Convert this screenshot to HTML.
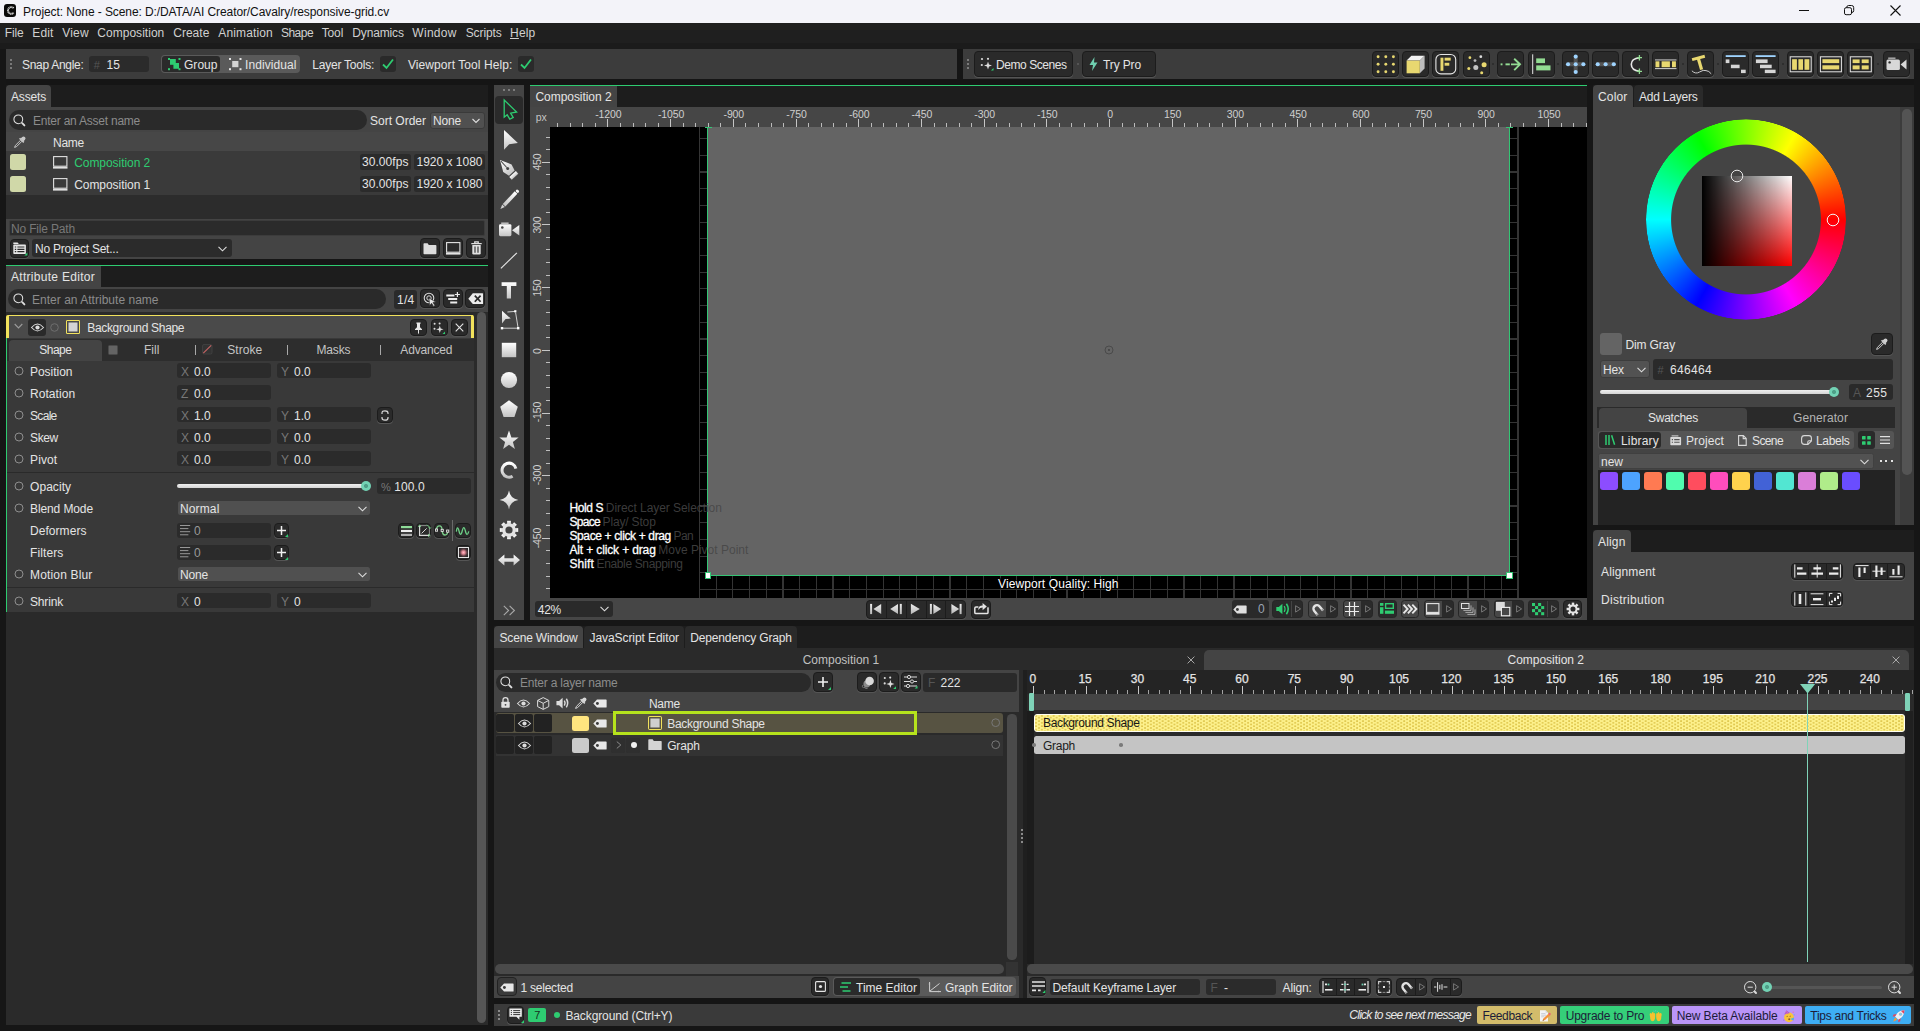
<!DOCTYPE html>
<html><head><meta charset="utf-8"><title>Cavalry</title>
<style>
html,body{margin:0;padding:0;}
body{width:1920px;height:1031px;overflow:hidden;background:#161616;font-family:"Liberation Sans",sans-serif;font-size:12px;color:#e4e4e4;position:relative;}
.a{position:absolute;box-sizing:border-box;}
.btn{background:#2a2a2a;border:1px solid #1c1c1c;border-radius:4px;box-shadow:0 1px 0 #555;}
.fld{background:#2b2b2b;border-radius:3px;}
svg{overflow:visible;}
</style></head><body>
<div class="a" style="left:0px;top:0px;width:1920px;height:23px;background:#f3f3f9;"></div>
<div class="a" style="left:3.6px;top:4.4px;width:12.9px;height:12.9px;background:#0a0a0a;border-radius:3px;"></div>
<svg class="a" style="left:3.6px;top:4.4px;" width="12.9" height="12.9" viewBox="0 0 12.9 12.9"><path d="M9.6 4.1 A3.3 3.3 0 1 0 9.6 8.8" fill="none" stroke="#dcdcdc" stroke-width="1.9" stroke-dasharray="1.1 0.35"/></svg>
<div class="a" style="left:23px;top:3.5px;height:16px;line-height:16px;font-size:12px;color:#111;white-space:nowrap;letter-spacing:-0.092px;">Project: None - Scene: D:/DATA/AI Creator/Cavalry/responsive-grid.cv</div>
<svg class="a" style="left:1799px;top:10px;" width="10" height="2" viewBox="0 0 10 2"><rect x="0" y="0" width="10" height="1" fill="#111"/></svg>
<svg class="a" style="left:1844px;top:5px;" width="11" height="11" viewBox="0 0 11 11"><rect x="0.5" y="2.7" width="7" height="7" rx="1.6" fill="none" stroke="#111" stroke-width="1"/><path d="M2.6 2.6 Q2.8 0.5 4.6 0.5 H7.6 Q9.7 0.5 9.7 2.6 V5.6 Q9.7 7.4 7.7 7.6" fill="none" stroke="#111" stroke-width="1"/></svg>
<svg class="a" style="left:1890px;top:5px;" width="11" height="11" viewBox="0 0 11 11"><path d="M0.5 0.5 L10.5 10.5 M10.5 0.5 L0.5 10.5" stroke="#111" stroke-width="1.1" fill="none"/></svg>
<div class="a" style="left:0px;top:23px;width:1920px;height:20px;background:#1f1f1f;"></div>
<div class="a" style="left:4.7px;top:24.7px;height:16px;line-height:16px;font-size:12px;color:#d0d0d0;white-space:nowrap;letter-spacing:-0.086px;">File</div>
<div class="a" style="left:32.3px;top:24.7px;height:16px;line-height:16px;font-size:12px;color:#d0d0d0;white-space:nowrap;letter-spacing:0.082px;">Edit</div>
<div class="a" style="left:62.3px;top:24.7px;height:16px;line-height:16px;font-size:12px;color:#d0d0d0;white-space:nowrap;letter-spacing:0.176px;">View</div>
<div class="a" style="left:97.3px;top:24.7px;height:16px;line-height:16px;font-size:12px;color:#d0d0d0;white-space:nowrap;letter-spacing:0.027px;">Composition</div>
<div class="a" style="left:173.3px;top:24.7px;height:16px;line-height:16px;font-size:12px;color:#d0d0d0;white-space:nowrap;letter-spacing:-0.003px;">Create</div>
<div class="a" style="left:218.3px;top:24.7px;height:16px;line-height:16px;font-size:12px;color:#d0d0d0;white-space:nowrap;letter-spacing:0.127px;">Animation</div>
<div class="a" style="left:281px;top:24.7px;height:16px;line-height:16px;font-size:12px;color:#d0d0d0;white-space:nowrap;letter-spacing:-0.537px;">Shape</div>
<div class="a" style="left:321.7px;top:24.7px;height:16px;line-height:16px;font-size:12px;color:#d0d0d0;white-space:nowrap;letter-spacing:-0.129px;">Tool</div>
<div class="a" style="left:352.3px;top:24.7px;height:16px;line-height:16px;font-size:12px;color:#d0d0d0;white-space:nowrap;letter-spacing:-0.148px;">Dynamics</div>
<div class="a" style="left:412.3px;top:24.7px;height:16px;line-height:16px;font-size:12px;color:#d0d0d0;white-space:nowrap;letter-spacing:0.302px;">Window</div>
<div class="a" style="left:465.7px;top:24.7px;height:16px;line-height:16px;font-size:12px;color:#d0d0d0;white-space:nowrap;letter-spacing:-0.096px;">Scripts</div>
<div class="a" style="left:510px;top:24.7px;height:16px;line-height:16px;font-size:12px;color:#d0d0d0;white-space:nowrap;letter-spacing:0.203px;"><span style="text-decoration:underline">H</span>elp</div>
<div class="a" style="left:0px;top:43px;width:1920px;height:6px;background:#1b1b1b;"></div>
<div class="a" style="left:6px;top:85px;width:482px;height:22px;background:#1d1d1d;"></div>
<div class="a" style="left:6px;top:266px;width:482px;height:21px;background:#1d1d1d;"></div>
<div class="a" style="left:530px;top:86.4px;width:1057px;height:20.6px;background:#1d1d1d;"></div>
<div class="a" style="left:1593px;top:85px;width:321px;height:22px;background:#1d1d1d;"></div>
<div class="a" style="left:1593px;top:530px;width:321px;height:22px;background:#1d1d1d;"></div>
<div class="a" style="left:494px;top:626.4px;width:1420px;height:21.6px;background:#1d1d1d;"></div>
<div class="a" style="left:6px;top:79px;width:1908px;height:6px;background:#151515;"></div>
<div class="a" style="left:6px;top:49px;width:951px;height:30px;background:#3c3c3c;"></div>
<div class="a" style="left:10px;top:59px;width:2px;height:2px;background:#7a7a7a;"></div>
<div class="a" style="left:10px;top:63px;width:2px;height:2px;background:#7a7a7a;"></div>
<div class="a" style="left:10px;top:67px;width:2px;height:2px;background:#7a7a7a;"></div>
<div class="a" style="left:22px;top:56.5px;height:16px;line-height:16px;font-size:12px;color:#e4e4e4;white-space:nowrap;letter-spacing:-0.291px;">Snap Angle:</div>
<div class="a" style="left:89px;top:56px;width:60px;height:16px;background:#2b2b2b;border-radius:3px;"></div>
<div class="a" style="left:93.8px;top:56.5px;height:16px;line-height:16px;font-size:11px;color:#555;white-space:nowrap;">#</div>
<div class="a" style="left:106.5px;top:56.5px;height:16px;line-height:16px;font-size:12px;color:#e4e4e4;white-space:nowrap;">15</div>
<div class="a" style="left:161px;top:55px;width:139px;height:18px;background:#5a5a5a;border-radius:4px;"></div>
<div class="a" style="left:162px;top:56px;width:58px;height:16px;background:#2a2a2a;border-radius:3px;"></div>
<svg class="a" style="left:167.5px;top:58px;" width="12.5" height="12.2" viewBox="0 0 12.5 12.2"><rect x="0" y="0" width="2" height="2" fill="#2ecc71"/><rect x="0" y="10.2" width="2" height="2" fill="#2ecc71"/><rect x="10.5" y="0" width="2" height="2" fill="#2ecc71"/><rect x="10.5" y="10.2" width="2" height="2" fill="#2ecc71"/><rect x="2" y="1" width="5.8" height="5.8" fill="#2ecc71"/><rect x="5.4" y="5" width="5.6" height="5.8" fill="#2ecc71"/></svg>
<div class="a" style="left:184px;top:56.5px;height:16px;line-height:16px;font-size:12px;color:#e4e4e4;white-space:nowrap;letter-spacing:0.031px;">Group</div>
<svg class="a" style="left:229px;top:58px;" width="12.5" height="12.2" viewBox="0 0 12.5 12.2"><rect x="0" y="0" width="2" height="2" fill="#e4e4e4"/><rect x="0" y="10.2" width="2" height="2" fill="#e4e4e4"/><rect x="10.5" y="0" width="2" height="2" fill="#e4e4e4"/><rect x="10.5" y="10.2" width="2" height="2" fill="#e4e4e4"/><rect x="3.2" y="3" width="6.2" height="6.2" fill="#d4d4d4"/></svg>
<div class="a" style="left:245px;top:56.5px;height:16px;line-height:16px;font-size:12px;color:#e4e4e4;white-space:nowrap;letter-spacing:0.080px;">Individual</div>
<div class="a" style="left:312.3px;top:56.5px;height:16px;line-height:16px;font-size:12px;color:#e4e4e4;white-space:nowrap;letter-spacing:-0.231px;">Layer Tools:</div>
<div class="a" style="left:380px;top:56px;width:16px;height:16px;background:#2a2a2a;border-radius:3px;"></div>
<svg class="a" style="left:382px;top:58px;" width="12" height="12" viewBox="0 0 12 12"><path d="M1 6.5 L4.5 10 L11 1.5" fill="none" stroke="#2ecc71" stroke-width="1.8"/></svg>
<div class="a" style="left:408px;top:56.5px;height:16px;line-height:16px;font-size:12px;color:#e4e4e4;white-space:nowrap;letter-spacing:0.072px;">Viewport Tool Help:</div>
<div class="a" style="left:517.7px;top:56px;width:16px;height:16px;background:#2a2a2a;border-radius:3px;"></div>
<svg class="a" style="left:519.7px;top:58px;" width="12" height="12" viewBox="0 0 12 12"><path d="M1 6.5 L4.5 10 L11 1.5" fill="none" stroke="#2ecc71" stroke-width="1.8"/></svg>
<div class="a" style="left:957px;top:49px;width:6px;height:30px;background:#151515;"></div>
<div class="a" style="left:963px;top:49px;width:951px;height:30px;background:#3c3c3c;"></div>
<div class="a" style="left:967px;top:59px;width:2px;height:2px;background:#7a7a7a;"></div>
<div class="a" style="left:967px;top:63px;width:2px;height:2px;background:#7a7a7a;"></div>
<div class="a" style="left:967px;top:67px;width:2px;height:2px;background:#7a7a7a;"></div>
<div class="a btn" style="left:974.3px;top:50.7px;width:99px;height:26.6px;"></div>
<svg class="a" style="left:980px;top:57px;" width="14" height="14" viewBox="0 0 14 14"><circle cx="2" cy="2" r="1.1" fill="#ddd"/><circle cx="8" cy="1.8" r="1.1" fill="#ddd"/><circle cx="1.8" cy="8" r="1.1" fill="#ddd"/><path d="M8 4.5 L9 7.5 L12 8.5 L9 9.5 L8 12.5 L7 9.5 L4 8.5 L7 7.5 Z" fill="#ddd"/><path d="M13.5 11 V13.5 H11 Z" fill="#2ecc71"/></svg>
<div class="a" style="left:996px;top:56.5px;height:16px;line-height:16px;font-size:12px;color:#e4e4e4;white-space:nowrap;letter-spacing:-0.442px;">Demo Scenes</div>
<div class="a" style="left:1077px;top:63px;width:2px;height:2px;background:#555;"></div>
<div class="a btn" style="left:1081.7px;top:50.7px;width:74px;height:26.6px;"></div>
<svg class="a" style="left:1089px;top:57px;" width="9" height="14" viewBox="0 0 9 14"><path d="M5.5 0 L0.5 8 H4 L3 14 L8.5 5.5 H5 Z" fill="#6fcfb0"/></svg>
<div class="a" style="left:1103px;top:56.5px;height:16px;line-height:16px;font-size:12px;color:#e4e4e4;white-space:nowrap;letter-spacing:-0.127px;">Try Pro</div>
<div class="a btn" style="left:1372.3px;top:50.7px;width:27px;height:26.6px;"></div>
<svg class="a" style="left:1372.3px;top:50.7px;" width="27" height="27" viewBox="0 0 27 27"><circle cx="6.1" cy="5.7" r="1.45" fill="#e8d870"/><circle cx="6.1" cy="13.3" r="1.45" fill="#e8d870"/><circle cx="6.1" cy="20.8" r="1.45" fill="#e8d870"/><circle cx="13.8" cy="5.7" r="1.45" fill="#e8d870"/><circle cx="13.8" cy="13.3" r="1.45" fill="#e8d870"/><circle cx="13.8" cy="20.8" r="1.45" fill="#e8d870"/><circle cx="21.4" cy="5.7" r="1.45" fill="#e8d870"/><circle cx="21.4" cy="13.3" r="1.45" fill="#e8d870"/><circle cx="21.4" cy="20.8" r="1.45" fill="#e8d870"/></svg>
<div class="a btn" style="left:1402.3px;top:50.7px;width:27px;height:26.6px;"></div>
<svg class="a" style="left:1402.3px;top:50.7px;" width="27" height="27" viewBox="0 0 27 27"><path d="M4.6 9.6 L9.4 4.8 H22.6 L17.8 9.6 Z" fill="#f2f2f2"/><path d="M17.8 9.6 L22.6 4.8 V17.5 L17.8 22.3 Z" fill="#bdbdbd"/><rect x="4.6" y="9.6" width="13.2" height="12.7" fill="#e8d870"/></svg>
<div class="a btn" style="left:1432.3px;top:50.7px;width:27px;height:26.6px;"></div>
<svg class="a" style="left:1432.3px;top:50.7px;" width="27" height="27" viewBox="0 0 27 27"><rect x="3.9" y="3.5" width="19.8" height="19.4" rx="5" fill="none" stroke="#e6e6e6" stroke-width="1.1"/><rect x="8.5" y="6.7" width="2.9" height="13.1" fill="#e8d870"/><rect x="12.6" y="6.7" width="6.1" height="2.9" fill="#e8d870"/><rect x="12.6" y="11.8" width="4.7" height="2.9" fill="#e8d870"/></svg>
<div class="a btn" style="left:1462.7px;top:50.7px;width:27px;height:26.6px;"></div>
<svg class="a" style="left:1462.7px;top:50.7px;" width="27" height="27" viewBox="0 0 27 27"><circle cx="6.9" cy="6.7" r="1.4" fill="#e8d870"/><circle cx="17.8" cy="5.7" r="1.4" fill="#ddd"/><circle cx="12" cy="9.6" r="1.4" fill="#bbb"/><circle cx="21.1" cy="13.7" r="2.5" fill="#e8d870"/><circle cx="5.8" cy="17.6" r="1.5" fill="#e8d870"/><circle cx="12.8" cy="16.6" r="2.5" fill="#c4c4c4"/><circle cx="18.7" cy="21.7" r="1.5" fill="#e8d870"/></svg>
<div class="a btn" style="left:1497.3px;top:50.7px;width:27px;height:26.6px;"></div>
<svg class="a" style="left:1497.3px;top:50.7px;" width="27" height="27" viewBox="0 0 27 27"><rect x="3.6" y="12.4" width="1.9" height="1.9" fill="#93dc93"/><rect x="8.5" y="12.4" width="4.3" height="1.9" fill="#93dc93"/><path d="M14 13.35 H22.6 M17.2 7.7 L23 13.35 L17.2 19.1" fill="none" stroke="#93dc93" stroke-width="1.9"/></svg>
<div class="a btn" style="left:1527.7px;top:50.7px;width:27px;height:26.6px;"></div>
<svg class="a" style="left:1527.7px;top:50.7px;" width="27" height="27" viewBox="0 0 27 27"><rect x="4.2" y="3.3" width="1" height="19.7" fill="#e6e6e6"/><rect x="8.2" y="7.4" width="8.8" height="4.7" fill="#93dc93"/><rect x="8.2" y="14.4" width="14.3" height="5" fill="#93dc93"/></svg>
<div class="a btn" style="left:1562.3px;top:50.7px;width:27px;height:26.6px;"></div>
<svg class="a" style="left:1562.3px;top:50.7px;" width="27" height="27" viewBox="0 0 27 27"><path d="M13.7 5.6 V21 M6 13.3 H21.4" stroke="#555" stroke-width="4" fill="none"/><circle cx="13.7" cy="13.3" r="2.05" fill="#9fd4ff"/><circle cx="6" cy="13.3" r="2.05" fill="#9fd4ff"/><circle cx="21.4" cy="13.3" r="2.05" fill="#9fd4ff"/><circle cx="13.7" cy="5.6" r="2.05" fill="#9fd4ff"/><circle cx="13.7" cy="21" r="2.05" fill="#9fd4ff"/></svg>
<div class="a btn" style="left:1592.3px;top:50.7px;width:27px;height:26.6px;"></div>
<svg class="a" style="left:1592.3px;top:50.7px;" width="27" height="27" viewBox="0 0 27 27"><path d="M5.7 13.3 H21.8" stroke="#555" stroke-width="4" stroke-linecap="round" fill="none"/><circle cx="5.7" cy="13.3" r="2.05" fill="#9fd4ff"/><circle cx="13.6" cy="13.3" r="2.05" fill="#9fd4ff"/><circle cx="21.8" cy="13.3" r="2.05" fill="#9fd4ff"/></svg>
<div class="a btn" style="left:1622.3px;top:50.7px;width:27px;height:26.6px;"></div>
<svg class="a" style="left:1622.3px;top:50.7px;" width="27" height="27" viewBox="0 0 27 27"><path d="M17.6 6.7 Q9.3 7.5 9.3 13.3 Q9.3 19.3 17.6 20.3" fill="none" stroke="#e6e6e6" stroke-width="1.6"/><path d="M14.8 6.7 H20 M17.4 4 V9.4 M14.8 20.3 H20 M17.4 17.6 V23" stroke="#93dc93" stroke-width="1.3" fill="none"/></svg>
<div class="a btn" style="left:1652.3px;top:50.7px;width:27px;height:26.6px;"></div>
<svg class="a" style="left:1652.3px;top:50.7px;" width="27" height="27" viewBox="0 0 27 27"><rect x="3" y="8.5" width="21.5" height="0.9" fill="#e6e6e6"/><rect x="3" y="17.2" width="21.5" height="0.9" fill="#e6e6e6"/><rect x="3.5" y="10.3" width="3.9" height="5.9" fill="#e8d870"/><rect x="9.6" y="10.3" width="8.3" height="5.9" fill="#e8d870"/><rect x="20" y="10.3" width="3.9" height="5.9" fill="#e8d870"/></svg>
<div class="a btn" style="left:1687.3px;top:50.7px;width:27px;height:26.6px;"></div>
<svg class="a" style="left:1687.3px;top:50.7px;" width="27" height="27" viewBox="0 0 27 27"><path d="M5.1 8.6 L17.8 5.2" stroke="#e8d870" stroke-width="3" fill="none"/><path d="M11.2 7 L14.6 18.6" stroke="#e8d870" stroke-width="3.2" fill="none"/><path d="M4.9 19.8 Q8.5 23.5 12.5 21 T19 19.6 Q22 19.8 24.2 22.8" stroke="#ccc" stroke-width="1" fill="none"/></svg>
<div class="a btn" style="left:1722.3px;top:50.7px;width:27px;height:26.6px;"></div>
<svg class="a" style="left:1722.3px;top:50.7px;" width="27" height="27" viewBox="0 0 27 27"><rect x="3.7" y="4.2" width="20" height="1.8" fill="#9fd4ff"/><rect x="3.7" y="8.4" width="3.7" height="3.7" fill="#d6d6d6"/><rect x="8.9" y="13.7" width="8.7" height="3.5" fill="#d6d6d6"/><rect x="19" y="18.7" width="4.7" height="3.4" fill="#d6d6d6"/></svg>
<div class="a btn" style="left:1752.3px;top:50.7px;width:27px;height:26.6px;"></div>
<svg class="a" style="left:1752.3px;top:50.7px;" width="27" height="27" viewBox="0 0 27 27"><rect x="3.6" y="4.2" width="20" height="1.8" fill="#9fd4ff"/><rect x="3.9" y="8.4" width="11.7" height="3.7" fill="#d6d6d6"/><rect x="8" y="13.7" width="11.7" height="3.5" fill="#d6d6d6"/><rect x="12.8" y="18.7" width="10.8" height="3.4" fill="#d6d6d6"/></svg>
<div class="a btn" style="left:1787.3px;top:50.7px;width:27px;height:26.6px;"></div>
<svg class="a" style="left:1787.3px;top:50.7px;" width="27" height="27" viewBox="0 0 27 27"><rect x="3.2" y="5.8" width="21" height="15" fill="none" stroke="#e6e6e6" stroke-width="1"/><rect x="5.1" y="8.2" width="4.8" height="10.6" fill="#e8d870"/><rect x="11.4" y="8.2" width="4.6" height="10.6" fill="#e8d870"/><rect x="17.5" y="8.2" width="4.8" height="10.6" fill="#e8d870"/></svg>
<div class="a btn" style="left:1817.3px;top:50.7px;width:27px;height:26.6px;"></div>
<svg class="a" style="left:1817.3px;top:50.7px;" width="27" height="27" viewBox="0 0 27 27"><rect x="3.4" y="5.8" width="21" height="15" fill="none" stroke="#e6e6e6" stroke-width="1"/><rect x="5.4" y="8.2" width="16.8" height="3.9" fill="#e8d870"/><rect x="5.4" y="14.3" width="16.8" height="4.1" fill="#e8d870"/></svg>
<div class="a btn" style="left:1847.3px;top:50.7px;width:27px;height:26.6px;"></div>
<svg class="a" style="left:1847.3px;top:50.7px;" width="27" height="27" viewBox="0 0 27 27"><rect x="3.3" y="5.8" width="21" height="15" fill="none" stroke="#e6e6e6" stroke-width="1"/><rect x="5.6" y="8.4" width="7" height="3.7" fill="#e8d870"/><rect x="14.7" y="8.4" width="7" height="3.7" fill="#e8d870"/><rect x="5.6" y="14.4" width="7" height="4" fill="#e8d870"/><rect x="14.7" y="14.4" width="7" height="4" fill="#e8d870"/></svg>
<div class="a btn" style="left:1882.7px;top:50.7px;width:27px;height:26.6px;"></div>
<svg class="a" style="left:1882.7px;top:50.7px;" width="27" height="27" viewBox="0 0 27 27"><rect x="3.5" y="8.4" width="13.4" height="10.7" rx="1.5" fill="#d8d8d8"/><rect x="5.2" y="6.6" width="7.3" height="1.1" fill="#d8d8d8"/><path d="M17.6 13.6 L23.5 8.6 V18.6 Z" fill="#d8d8d8"/><circle cx="6.6" cy="11.4" r="1.2" fill="#2a2a2a"/></svg>
<div class="a" style="left:1492.1px;top:62.8px;width:2.4px;height:2.4px;background:#2a2a2a;border-radius:1.2px;"></div>
<div class="a" style="left:1557.1px;top:62.8px;width:2.4px;height:2.4px;background:#2a2a2a;border-radius:1.2px;"></div>
<div class="a" style="left:1682.1px;top:62.8px;width:2.4px;height:2.4px;background:#2a2a2a;border-radius:1.2px;"></div>
<div class="a" style="left:1717.1px;top:62.8px;width:2.4px;height:2.4px;background:#2a2a2a;border-radius:1.2px;"></div>
<div class="a" style="left:1782.1px;top:62.8px;width:2.4px;height:2.4px;background:#2a2a2a;border-radius:1.2px;"></div>
<div class="a" style="left:1877.1px;top:62.8px;width:2.4px;height:2.4px;background:#2a2a2a;border-radius:1.2px;"></div>
<div class="a" style="left:6px;top:85px;width:45px;height:22px;background:#444444;border-radius:4px 4px 0 0;"></div>
<div class="a" style="left:11px;top:88.5px;height:16px;line-height:16px;font-size:12px;color:#e4e4e4;white-space:nowrap;letter-spacing:-0.167px;">Assets</div>
<div class="a" style="left:6px;top:107px;width:482px;height:152px;background:#444444;"></div>
<div class="a" style="left:9px;top:110.2px;width:358px;height:19.8px;background:#2a2a2a;border-radius:10px;"></div>
<svg class="a" style="left:13px;top:114.4px;" width="14" height="14" viewBox="0 0 14 14"><circle cx="5.3" cy="5.3" r="4.4" fill="none" stroke="#e0e0e0" stroke-width="1.05"/><path d="M9.2 9.2 L11.4 11.4" stroke="#e0e0e0" stroke-width="1.9" stroke-linecap="round"/></svg>
<div class="a" style="left:33px;top:113.2px;height:16px;line-height:16px;font-size:12px;color:#8c8c8c;white-space:nowrap;letter-spacing:-0.229px;">Enter an Asset name</div>
<div class="a" style="left:370px;top:112.5px;height:16px;line-height:16px;font-size:12px;color:#e4e4e4;white-space:nowrap;letter-spacing:0.000px;">Sort Order</div>
<div class="a" style="left:430px;top:111.5px;width:54.5px;height:17.5px;background:#505050;border-radius:3px;border:1px solid #3a3a3a;"></div>
<div class="a" style="left:433px;top:112.5px;height:16px;line-height:16px;font-size:12px;color:#e4e4e4;white-space:nowrap;letter-spacing:-0.172px;">None</div>
<svg class="a" style="left:472px;top:117.5px;" width="8" height="6" viewBox="0 0 8 6"><path d="M0.5 1 L4 4.5 L7.5 1" fill="none" stroke="#ddd" stroke-width="1.1"/></svg>
<div class="a" style="left:6px;top:132px;width:482px;height:19px;background:#474747;"></div>
<svg class="a" style="left:14px;top:135.5px;" width="12" height="12" viewBox="0 0 12 12"><path d="M8.2 1 Q9.6 -0.2 10.9 1.1 Q12.2 2.4 11 3.8 L9.4 5.4 L6.6 2.6 Z" fill="#c8c8c8"/><path d="M5.6 2.2 L9.8 6.4" stroke="#c8c8c8" stroke-width="1.6"/><path d="M6.8 4 L1.4 9.4 L0.6 11.4 L2.6 10.6 L8 5.2" fill="none" stroke="#c8c8c8" stroke-width="1"/></svg>
<div class="a" style="left:53px;top:134.5px;height:16px;line-height:16px;font-size:12px;color:#e4e4e4;white-space:nowrap;letter-spacing:-0.254px;">Name</div>
<div class="a" style="left:6px;top:151px;width:482px;height:44px;background:#3a3a3a;"></div>
<div class="a" style="left:10px;top:154.2px;width:16px;height:16px;background:#d0d8a8;border-radius:2.5px;"></div>
<svg class="a" style="left:53px;top:156.3px;" width="15" height="13" viewBox="0 0 15 13"><rect x="0.6" y="0.6" width="13.3" height="9.6" fill="none" stroke="#e0e0e0" stroke-width="1.1"/><rect x="0" y="10.8" width="14.5" height="1.8" fill="#e0e0e0"/></svg>
<div class="a" style="left:74.2px;top:155.3px;height:16px;line-height:16px;font-size:12px;color:#2ecc71;white-space:nowrap;letter-spacing:-0.054px;">Composition 2</div>
<div class="a" style="left:360px;top:154.2px;width:51px;height:15.6px;background:#2b2b2b;border-radius:2.5px;"></div>
<div class="a" style="left:362px;top:153.7px;height:16px;line-height:16px;font-size:12px;color:#e4e4e4;white-space:nowrap;letter-spacing:0.061px;">30.00fps</div>
<div class="a" style="left:414px;top:154.2px;width:71px;height:15.6px;background:#2b2b2b;border-radius:2.5px;"></div>
<div class="a" style="left:416.5px;top:153.7px;height:16px;line-height:16px;font-size:12px;color:#e4e4e4;white-space:nowrap;letter-spacing:-0.003px;">1920 x 1080</div>
<div class="a" style="left:10px;top:176.2px;width:16px;height:16px;background:#d0d8a8;border-radius:2.5px;"></div>
<svg class="a" style="left:53px;top:178.3px;" width="15" height="13" viewBox="0 0 15 13"><rect x="0.6" y="0.6" width="13.3" height="9.6" fill="none" stroke="#e0e0e0" stroke-width="1.1"/><rect x="0" y="10.8" width="14.5" height="1.8" fill="#e0e0e0"/></svg>
<div class="a" style="left:74.2px;top:177.3px;height:16px;line-height:16px;font-size:12px;color:#e4e4e4;white-space:nowrap;letter-spacing:-0.054px;">Composition 1</div>
<div class="a" style="left:360px;top:176.2px;width:51px;height:15.6px;background:#2b2b2b;border-radius:2.5px;"></div>
<div class="a" style="left:362px;top:175.7px;height:16px;line-height:16px;font-size:12px;color:#e4e4e4;white-space:nowrap;letter-spacing:0.061px;">30.00fps</div>
<div class="a" style="left:414px;top:176.2px;width:71px;height:15.6px;background:#2b2b2b;border-radius:2.5px;"></div>
<div class="a" style="left:416.5px;top:175.7px;height:16px;line-height:16px;font-size:12px;color:#e4e4e4;white-space:nowrap;letter-spacing:-0.003px;">1920 x 1080</div>
<div class="a" style="left:6px;top:195px;width:482px;height:24px;background:#2c2c2c;"></div>
<div class="a" style="left:9px;top:219.5px;width:476px;height:16.5px;background:#2b2b2b;border-radius:2px;border:1px solid #3c3c3c;"></div>
<div class="a" style="left:11px;top:220.5px;height:16px;line-height:16px;font-size:12px;color:#787878;white-space:nowrap;letter-spacing:-0.168px;">No File Path</div>
<div class="a btn" style="left:10px;top:238.5px;width:18.5px;height:19.5px;"></div>
<svg class="a" style="left:12.6px;top:241.8px;" width="14" height="13" viewBox="0 0 14 13"><path d="M0.3 0.6 H4.6 L5.8 2 H0.3 Z" fill="#e6e6e6"/><rect x="0.3" y="2.6" width="12.6" height="9.4" rx="0.8" fill="#e6e6e6"/><path d="M1.8 5 H3.2 M4.4 5 H11.4 M1.8 7.3 H3.2 M4.4 7.3 H11.4 M1.8 9.6 H3.2 M4.4 9.6 H11.4" stroke="#2a2a2a" stroke-width="1.2"/><path d="M14.4 10.4 V13.4 H11.4 Z" fill="#2ecc71"/></svg>
<div class="a" style="left:32px;top:239.3px;width:200px;height:17.8px;background:#2b2b2b;border-radius:3px;"></div>
<div class="a" style="left:35px;top:240.8px;height:16px;line-height:16px;font-size:12px;color:#e4e4e4;white-space:nowrap;letter-spacing:-0.225px;">No Project Set...</div>
<svg class="a" style="left:218px;top:246px;" width="9" height="6" viewBox="0 0 9 6"><path d="M0.5 0.8 L4.5 4.8 L8.5 0.8" fill="none" stroke="#ddd" stroke-width="1.1"/></svg>
<div class="a btn" style="left:420px;top:238.3px;width:19.5px;height:20px;"></div>
<div class="a btn" style="left:443.4px;top:238.3px;width:19.5px;height:20px;"></div>
<div class="a btn" style="left:466px;top:238.3px;width:19.5px;height:20px;"></div>
<svg class="a" style="left:423px;top:242.5px;" width="14" height="12" viewBox="0 0 14 12"><path d="M0.5 1 Q0.5 0.3 1.2 0.3 H4.6 L5.8 2 H12.6 Q13.4 2 13.4 2.8 V10.4 Q13.4 11.2 12.6 11.2 H1.3 Q0.5 11.2 0.5 10.4 Z" fill="#dcdcdc"/></svg>
<svg class="a" style="left:445.8px;top:242.2px;" width="15" height="13" viewBox="0 0 15 13"><rect x="0.6" y="0.6" width="13.3" height="9.6" fill="none" stroke="#e4e4e4" stroke-width="1.1"/><rect x="0" y="10.8" width="14.5" height="1.8" fill="#e4e4e4"/></svg>
<svg class="a" style="left:470.5px;top:241.3px;" width="11" height="14" viewBox="0 0 11 14"><path d="M0.3 2.6 H10.7 M3.8 2.4 V0.8 H7.2 V2.4" fill="none" stroke="#e0e0e0" stroke-width="1.3"/><path d="M1.3 4 H9.7 V12.2 Q9.7 13.4 8.5 13.4 H2.5 Q1.3 13.4 1.3 12.2 Z" fill="#e0e0e0"/><path d="M4 5.5 V11.8 M7 5.5 V11.8" stroke="#2a2a2a" stroke-width="1.1"/></svg>
<div class="a" style="left:6px;top:265px;width:482px;height:1px;background:#2ecc71;"></div>
<div class="a" style="left:6px;top:266px;width:95px;height:21px;background:#444444;border-radius:0 0 0 0;"></div>
<div class="a" style="left:11px;top:268.5px;height:16px;line-height:16px;font-size:12px;color:#e4e4e4;white-space:nowrap;letter-spacing:0.291px;">Attribute Editor</div>
<div class="a" style="left:6px;top:287px;width:482px;height:738px;background:#444444;"></div>
<div class="a" style="left:6px;top:312px;width:482px;height:713px;background:#2a2a2a;"></div>
<div class="a" style="left:488px;top:85px;width:6px;height:941px;background:#161616;"></div>
<div class="a" style="left:8.3px;top:289.2px;width:378px;height:19.8px;background:#2a2a2a;border-radius:10px;"></div>
<svg class="a" style="left:12.5px;top:293px;" width="14" height="14" viewBox="0 0 14 14"><circle cx="5.3" cy="5.3" r="4.4" fill="none" stroke="#e0e0e0" stroke-width="1.05"/><path d="M9.2 9.2 L11.4 11.4" stroke="#e0e0e0" stroke-width="1.9" stroke-linecap="round"/></svg>
<div class="a" style="left:32px;top:292.2px;height:16px;line-height:16px;font-size:12px;color:#8c8c8c;white-space:nowrap;letter-spacing:0.020px;">Enter an Attribute name</div>
<div class="a" style="left:393.7px;top:289.6px;width:23px;height:19px;background:#2a2a2a;border-radius:3px;"></div>
<div class="a" style="left:397px;top:292.2px;height:16px;line-height:16px;font-size:12px;color:#e4e4e4;white-space:nowrap;letter-spacing:0.276px;">1/4</div>
<div class="a btn" style="left:419.8px;top:288.8px;width:20px;height:19.6px;"></div>
<div class="a btn" style="left:443.2px;top:288.8px;width:20px;height:19.6px;"></div>
<div class="a btn" style="left:465.4px;top:288.8px;width:20px;height:19.6px;"></div>
<svg class="a" style="left:422.6px;top:291.6px;" width="15" height="15" viewBox="0 0 15 15"><circle cx="6" cy="6" r="4.8" fill="none" stroke="#e0e0e0" stroke-width="1.05"/><circle cx="6" cy="6" r="2.2" fill="none" stroke="#e0e0e0" stroke-width="0.95"/><path d="M6 6 L6.6 13.4 L8.6 11.2 L10.6 14.4 L11.9 13.6 L10 10.5 L12.8 10.1 Z" fill="#e8e8e8" stroke="#2a2a2a" stroke-width="0.6"/></svg>
<svg class="a" style="left:446.3px;top:292px;" width="14" height="13" viewBox="0 0 14 13"><path d="M0.3 3.4 H8.4 M2.2 6.9 H11.2 M4.2 10.4 H11.2" stroke="#ececec" stroke-width="2" fill="none"/><path d="M11.4 0 V5 M8.9 2.5 H13.9" stroke="#ececec" stroke-width="1.2" fill="none"/></svg>
<svg class="a" style="left:468px;top:292.8px;" width="15.4" height="11.4" viewBox="0 0 15.4 11.4"><path d="M4.8 0.3 H14.6 Q15.1 0.3 15.1 0.8 V10.6 Q15.1 11.1 14.6 11.1 H4.8 L0.3 5.7 Z" fill="#ececec"/><path d="M6.8 2.6 L12.6 8.8 M12.6 2.6 L6.8 8.8" stroke="#2a2a2a" stroke-width="1.7"/></svg>
<div class="a" style="left:476.6px;top:312px;width:9.2px;height:711px;background:#555555;border-radius:4.6px;"></div>
<div class="a" style="left:6px;top:315px;width:468px;height:23px;background:#4a4a4a;border-top:1.5px solid #f2e25c;border-left:3px solid #f2e25c;border-right:3px solid #f2e25c;border-radius:2px 2px 0 0;"></div>
<svg class="a" style="left:14px;top:323px;" width="9" height="7" viewBox="0 0 9 7"><path d="M0.7 1 L4.5 5 L8.3 1" fill="none" stroke="#9a9a9a" stroke-width="1.1"/></svg>
<div class="a" style="left:28px;top:318.6px;width:17.8px;height:17px;background:#2a2a2a;border-radius:3px;"></div>
<svg class="a" style="left:30.5px;top:322.7px;" width="13" height="9.0" viewBox="0 0 13 9"><path d="M0.5 4.5 Q6.5 -2.4 12.5 4.5 Q6.5 11.4 0.5 4.5 Z" fill="none" stroke="#dcdcdc" stroke-width="1.05"/><circle cx="6.5" cy="4.5" r="2.1" fill="#dcdcdc"/></svg>
<svg class="a" style="left:50.2px;top:322.8px;" width="9" height="9" viewBox="0 0 9 9"><circle cx="4.5" cy="4.5" r="3.8" fill="none" stroke="#6e6e6e" stroke-width="1"/></svg>
<div class="a" style="left:65.6px;top:319.5px;width:14.5px;height:14.5px;background:#d4d4d4;border-radius:1px;border:1px solid #f2e25c;box-shadow:inset 0 0 0 1.5px #4a4a4a;"></div>
<div class="a" style="left:87.2px;top:319.5px;height:16px;line-height:16px;font-size:12px;color:#e4e4e4;white-space:nowrap;letter-spacing:-0.315px;">Background Shape</div>
<div class="a btn" style="left:410px;top:318.5px;width:17px;height:17px;"></div>
<div class="a btn" style="left:430.5px;top:318.5px;width:17px;height:17px;"></div>
<div class="a btn" style="left:450.5px;top:318.5px;width:17px;height:17px;"></div>
<svg class="a" style="left:414px;top:321.5px;" width="9" height="12" viewBox="0 0 9 12"><path d="M2.4 0.4 H6.6 V1.4 L6 2 V5.2 L8 7.2 V8 H1 V7.2 L3 5.2 V2 L2.4 1.4 Z" fill="#e8e8e8"/><path d="M4.5 8 V11.6" stroke="#e8e8e8" stroke-width="1"/></svg>
<svg class="a" style="left:433px;top:322px;" width="12" height="12" viewBox="0 0 12 12"><circle cx="1.6" cy="1.8" r="1" fill="#ddd"/><circle cx="6.6" cy="1.4" r="1" fill="#ddd"/><circle cx="1.5" cy="6.8" r="1" fill="#ddd"/><path d="M6.8 3.6 L7.7 6.4 L10.5 7.3 L7.7 8.2 L6.8 11 L5.9 8.2 L3.1 7.3 L5.9 6.4 Z" fill="#ddd"/><path d="M12 9.5 V12 H9.5 Z" fill="#2ecc71"/></svg>
<svg class="a" style="left:454.5px;top:323px;" width="9" height="9" viewBox="0 0 9 9"><path d="M0.7 0.7 L8.3 8.3 M8.3 0.7 L0.7 8.3" stroke="#e4e4e4" stroke-width="1.1"/></svg>
<div class="a" style="left:6px;top:338px;width:468px;height:274px;background:#393939;border-left:1px solid #2ecc71;"></div>
<div class="a" style="left:7px;top:339px;width:467px;height:21.5px;background:#2d2d2d;"></div>
<div class="a" style="left:8.6px;top:340px;width:93.4px;height:20.5px;background:#444;border-radius:4px 4px 0 0;"></div>
<div class="a" style="left:39.3px;top:341.5px;height:16px;line-height:16px;font-size:12px;color:#e4e4e4;white-space:nowrap;letter-spacing:-0.537px;">Shape</div>
<div class="a" style="left:108px;top:345.4px;width:9.7px;height:9.7px;background:#646464;border-radius:1.5px;border:1px solid #4a4a4a;"></div>
<div class="a" style="left:144px;top:341.5px;height:16px;line-height:16px;font-size:12px;color:#c4c4c4;white-space:nowrap;letter-spacing:0.039px;">Fill</div>
<div class="a" style="left:194.7px;top:344.5px;width:1px;height:10.5px;background:#a8a8a8;"></div>
<svg class="a" style="left:201.5px;top:344px;" width="10.5" height="10.5" viewBox="0 0 10.5 10.5"><rect x="0.5" y="0.5" width="9.5" height="9.5" rx="1.5" fill="#333" stroke="#444" stroke-width="0.8"/><path d="M1.3 9.2 L9.2 1.3" stroke="#c86464" stroke-width="1.1"/></svg>
<div class="a" style="left:227.3px;top:341.5px;height:16px;line-height:16px;font-size:12px;color:#c4c4c4;white-space:nowrap;letter-spacing:0.055px;">Stroke</div>
<div class="a" style="left:287.0px;top:344.5px;width:1px;height:10.5px;background:#a8a8a8;"></div>
<div class="a" style="left:316.4px;top:341.5px;height:16px;line-height:16px;font-size:12px;color:#c4c4c4;white-space:nowrap;letter-spacing:-0.134px;">Masks</div>
<div class="a" style="left:380.2px;top:344.5px;width:1px;height:10.5px;background:#a8a8a8;"></div>
<div class="a" style="left:400.3px;top:341.5px;height:16px;line-height:16px;font-size:12px;color:#c4c4c4;white-space:nowrap;letter-spacing:-0.170px;">Advanced</div>
<svg class="a" style="left:13.8px;top:366.3px;" width="10" height="10" viewBox="0 0 10 10"><circle cx="5" cy="5" r="4" fill="none" stroke="#8e8e8e" stroke-width="1"/></svg>
<div class="a" style="left:30px;top:363.8px;height:16px;line-height:16px;font-size:12px;color:#e4e4e4;white-space:nowrap;letter-spacing:-0.036px;">Position</div>
<div class="a" style="left:177px;top:362.8px;width:94px;height:15.5px;background:#2b2b2b;border-radius:3px;"></div><div class="a" style="left:181px;top:363.9px;height:16px;line-height:16px;font-size:12px;color:#777;white-space:nowrap;">X</div><div class="a" style="left:194px;top:364.0px;height:16px;line-height:16px;font-size:12px;color:#e4e4e4;white-space:nowrap;">0.0</div>
<div class="a" style="left:277px;top:362.8px;width:94px;height:15.5px;background:#2b2b2b;border-radius:3px;"></div><div class="a" style="left:281px;top:363.9px;height:16px;line-height:16px;font-size:12px;color:#777;white-space:nowrap;">Y</div><div class="a" style="left:294px;top:364.0px;height:16px;line-height:16px;font-size:12px;color:#e4e4e4;white-space:nowrap;">0.0</div>
<svg class="a" style="left:13.8px;top:388.40000000000003px;" width="10" height="10" viewBox="0 0 10 10"><circle cx="5" cy="5" r="4" fill="none" stroke="#8e8e8e" stroke-width="1"/></svg>
<div class="a" style="left:30px;top:385.9px;height:16px;line-height:16px;font-size:12px;color:#e4e4e4;white-space:nowrap;letter-spacing:0.064px;">Rotation</div>
<div class="a" style="left:177px;top:384.90000000000003px;width:94px;height:15.5px;background:#2b2b2b;border-radius:3px;"></div><div class="a" style="left:181px;top:386.0px;height:16px;line-height:16px;font-size:12px;color:#777;white-space:nowrap;">Z</div><div class="a" style="left:194px;top:386.1px;height:16px;line-height:16px;font-size:12px;color:#e4e4e4;white-space:nowrap;">0.0</div>
<svg class="a" style="left:13.8px;top:410.3px;" width="10" height="10" viewBox="0 0 10 10"><circle cx="5" cy="5" r="4" fill="none" stroke="#8e8e8e" stroke-width="1"/></svg>
<div class="a" style="left:30px;top:407.8px;height:16px;line-height:16px;font-size:12px;color:#e4e4e4;white-space:nowrap;letter-spacing:-0.683px;">Scale</div>
<div class="a" style="left:177px;top:406.8px;width:94px;height:15.5px;background:#2b2b2b;border-radius:3px;"></div><div class="a" style="left:181px;top:407.9px;height:16px;line-height:16px;font-size:12px;color:#777;white-space:nowrap;">X</div><div class="a" style="left:194px;top:408.0px;height:16px;line-height:16px;font-size:12px;color:#e4e4e4;white-space:nowrap;">1.0</div>
<div class="a" style="left:277px;top:406.8px;width:94px;height:15.5px;background:#2b2b2b;border-radius:3px;"></div><div class="a" style="left:281px;top:407.9px;height:16px;line-height:16px;font-size:12px;color:#777;white-space:nowrap;">Y</div><div class="a" style="left:294px;top:408.0px;height:16px;line-height:16px;font-size:12px;color:#e4e4e4;white-space:nowrap;">1.0</div>
<svg class="a" style="left:13.8px;top:432.40000000000003px;" width="10" height="10" viewBox="0 0 10 10"><circle cx="5" cy="5" r="4" fill="none" stroke="#8e8e8e" stroke-width="1"/></svg>
<div class="a" style="left:30px;top:429.9px;height:16px;line-height:16px;font-size:12px;color:#e4e4e4;white-space:nowrap;letter-spacing:-0.361px;">Skew</div>
<div class="a" style="left:177px;top:428.90000000000003px;width:94px;height:15.5px;background:#2b2b2b;border-radius:3px;"></div><div class="a" style="left:181px;top:430.0px;height:16px;line-height:16px;font-size:12px;color:#777;white-space:nowrap;">X</div><div class="a" style="left:194px;top:430.1px;height:16px;line-height:16px;font-size:12px;color:#e4e4e4;white-space:nowrap;">0.0</div>
<div class="a" style="left:277px;top:428.90000000000003px;width:94px;height:15.5px;background:#2b2b2b;border-radius:3px;"></div><div class="a" style="left:281px;top:430.0px;height:16px;line-height:16px;font-size:12px;color:#777;white-space:nowrap;">Y</div><div class="a" style="left:294px;top:430.1px;height:16px;line-height:16px;font-size:12px;color:#e4e4e4;white-space:nowrap;">0.0</div>
<svg class="a" style="left:13.8px;top:454.3px;" width="10" height="10" viewBox="0 0 10 10"><circle cx="5" cy="5" r="4" fill="none" stroke="#8e8e8e" stroke-width="1"/></svg>
<div class="a" style="left:30px;top:451.8px;height:16px;line-height:16px;font-size:12px;color:#e4e4e4;white-space:nowrap;letter-spacing:0.126px;">Pivot</div>
<div class="a" style="left:177px;top:450.8px;width:94px;height:15.5px;background:#2b2b2b;border-radius:3px;"></div><div class="a" style="left:181px;top:451.9px;height:16px;line-height:16px;font-size:12px;color:#777;white-space:nowrap;">X</div><div class="a" style="left:194px;top:452.0px;height:16px;line-height:16px;font-size:12px;color:#e4e4e4;white-space:nowrap;">0.0</div>
<div class="a" style="left:277px;top:450.8px;width:94px;height:15.5px;background:#2b2b2b;border-radius:3px;"></div><div class="a" style="left:281px;top:451.9px;height:16px;line-height:16px;font-size:12px;color:#777;white-space:nowrap;">Y</div><div class="a" style="left:294px;top:452.0px;height:16px;line-height:16px;font-size:12px;color:#e4e4e4;white-space:nowrap;">0.0</div>
<div class="a btn" style="left:377px;top:407px;width:15.7px;height:15.8px;"></div>
<svg class="a" style="left:381px;top:409.6px;" width="8" height="11" viewBox="0 0 8 11"><path d="M1 4 V3 Q1 0.8 4 0.8 Q7 0.8 7 3 V4 M1 7 V8 Q1 10.2 4 10.2 Q7 10.2 7 8 V7" fill="none" stroke="#d8d8d8" stroke-width="1.2"/></svg>
<div class="a" style="left:7px;top:472px;width:467px;height:1px;background:#2a2a2a;"></div>
<div class="a" style="left:7px;top:587.3px;width:467px;height:1px;background:#2a2a2a;"></div>
<svg class="a" style="left:13.8px;top:481.2px;" width="10" height="10" viewBox="0 0 10 10"><circle cx="5" cy="5" r="4" fill="none" stroke="#8e8e8e" stroke-width="1"/></svg>
<div class="a" style="left:30px;top:478.7px;height:16px;line-height:16px;font-size:12px;color:#e4e4e4;white-space:nowrap;letter-spacing:0.061px;">Opacity</div>
<div class="a" style="left:177px;top:484px;width:189px;height:4.4px;background:linear-gradient(#f0f0f0,#d4d4d4);border-radius:2.2px;"></div>
<div class="a" style="left:360.8px;top:481px;width:10.4px;height:10.4px;background:radial-gradient(circle,#4f9f88 0,#4f9f88 1.6px,#72d2b4 2.4px);border-radius:5.2px;"></div>
<div class="a" style="left:377px;top:478px;width:94px;height:16px;background:#2b2b2b;border-radius:3px;"></div>
<div class="a" style="left:381px;top:479.0px;height:16px;line-height:16px;font-size:11px;color:#777;white-space:nowrap;">%</div>
<div class="a" style="left:394.3px;top:479.2px;height:16px;line-height:16px;font-size:12px;color:#e4e4e4;white-space:nowrap;letter-spacing:0.097px;">100.0</div>
<svg class="a" style="left:13.8px;top:503px;" width="10" height="10" viewBox="0 0 10 10"><circle cx="5" cy="5" r="4" fill="none" stroke="#8e8e8e" stroke-width="1"/></svg>
<div class="a" style="left:30px;top:500.5px;height:16px;line-height:16px;font-size:12px;color:#e4e4e4;white-space:nowrap;letter-spacing:-0.103px;">Blend Mode</div>
<div class="a" style="left:177.6px;top:501px;width:192.6px;height:14.2px;background:#505050;border-radius:2.5px;"></div>
<div class="a" style="left:180px;top:500.5px;height:16px;line-height:16px;font-size:12px;color:#e4e4e4;white-space:nowrap;letter-spacing:0.135px;">Normal</div>
<svg class="a" style="left:358px;top:505.5px;" width="9" height="6" viewBox="0 0 9 6"><path d="M0.5 0.8 L4.5 4.8 L8.5 0.8" fill="none" stroke="#ddd" stroke-width="1.1"/></svg>
<div class="a" style="left:30px;top:522.6px;height:16px;line-height:16px;font-size:12px;color:#e4e4e4;white-space:nowrap;letter-spacing:0.054px;">Deformers</div>
<div class="a" style="left:177px;top:522.7px;width:94px;height:15px;background:#2b2b2b;border-radius:3px;"></div><svg class="a" style="left:180px;top:524.8000000000001px;" width="10.4" height="10.6" viewBox="0 0 10.4 10.6"><path d="M0 0.5 H10.2 M0 3.6 H8.4 M0 6.7 H10.2 M0 9.8 H8.4" stroke="#a4a4a4" stroke-width="0.9"/></svg><div class="a" style="left:194px;top:522.5px;height:16px;line-height:16px;font-size:12px;color:#9a9a9a;white-space:nowrap;">0</div><div class="a btn" style="left:273.6px;top:522.8000000000001px;width:15px;height:14.8px;"></div><svg class="a" style="left:276.5px;top:525.6px;" width="9" height="9" viewBox="0 0 9 9"><path d="M4.5 0 V9 M0 4.5 H9" stroke="#f0f0f0" stroke-width="1.5"/></svg><svg class="a" style="left:285.2px;top:534.4000000000001px;" width="3" height="3" viewBox="0 0 3 3"><path d="M3 0 V3 H0 Z" fill="#2ecc71"/></svg>
<div class="a" style="left:30px;top:544.7px;height:16px;line-height:16px;font-size:12px;color:#e4e4e4;white-space:nowrap;letter-spacing:0.118px;">Filters</div>
<div class="a" style="left:177px;top:544.8px;width:94px;height:15px;background:#2b2b2b;border-radius:3px;"></div><svg class="a" style="left:180px;top:546.9px;" width="10.4" height="10.6" viewBox="0 0 10.4 10.6"><path d="M0 0.5 H10.2 M0 3.6 H8.4 M0 6.7 H10.2 M0 9.8 H8.4" stroke="#a4a4a4" stroke-width="0.9"/></svg><div class="a" style="left:194px;top:544.6px;height:16px;line-height:16px;font-size:12px;color:#9a9a9a;white-space:nowrap;">0</div><div class="a btn" style="left:273.6px;top:544.9px;width:15px;height:14.8px;"></div><svg class="a" style="left:276.5px;top:547.6999999999999px;" width="9" height="9" viewBox="0 0 9 9"><path d="M4.5 0 V9 M0 4.5 H9" stroke="#f0f0f0" stroke-width="1.5"/></svg><svg class="a" style="left:285.2px;top:556.5px;" width="3" height="3" viewBox="0 0 3 3"><path d="M3 0 V3 H0 Z" fill="#2ecc71"/></svg>
<div class="a btn" style="left:398.4px;top:522.9px;width:15.4px;height:14.8px;"></div>
<div class="a btn" style="left:416px;top:522.9px;width:15.4px;height:14.8px;"></div>
<div class="a btn" style="left:433.6px;top:522.9px;width:15.4px;height:14.8px;"></div>
<div class="a btn" style="left:455.2px;top:522.9px;width:15.4px;height:14.8px;"></div>
<svg class="a" style="left:400.6px;top:525.6px;" width="11" height="10" viewBox="0 0 11 10"><path d="M0 1.1 H11" stroke="#8edc98" stroke-width="2.2"/><path d="M0 5 H11" stroke="#f0f0f0" stroke-width="2.2"/><path d="M0 8.9 H11" stroke="#b0b0b0" stroke-width="2.2"/></svg>
<svg class="a" style="left:417.6px;top:524.4px;" width="13" height="13" viewBox="0 0 13 13"><path d="M1.6 1.6 V11.4 H11.4" fill="none" stroke="#d8d8d8" stroke-width="1.2"/><path d="M1.6 1.6 H8.6 M11.4 11.4 V4.6" fill="none" stroke="#a8a8a8" stroke-width="0.8"/><path d="M3.6 9.4 L8.6 4.4" stroke="#d8d8d8" stroke-width="1"/><path d="M0.4 3 L1.6 0.8 L2.8 3 M10 10.2 L12.2 11.4 L10 12.6" fill="none" stroke="#7ccf8a" stroke-width="0.9"/><path d="M8.4 1.2 Q11.6 1.4 11.8 4.4 M10.6 3.6 L11.8 4.8 L12.8 3.4" fill="none" stroke="#7ccf8a" stroke-width="0.9"/></svg>
<svg class="a" style="left:434.6px;top:525.2px;" width="14" height="11" viewBox="0 0 14 11"><path d="M1.4 5 Q1.6 0.8 4.4 0.8 Q7 0.8 7.2 5.4 Q7.4 10 10 10 Q12.6 10 12.8 6" fill="none" stroke="#7ccf8a" stroke-width="1.3"/><rect x="0.4" y="4" width="2.2" height="2.2" fill="#3a3a3a" stroke="#f0f0f0" stroke-width="0.8"/><rect x="6.1" y="4.3" width="2.2" height="2.2" fill="#3a3a3a" stroke="#f0f0f0" stroke-width="0.8"/><rect x="11.6" y="5" width="2.2" height="2.2" fill="#3a3a3a" stroke="#f0f0f0" stroke-width="0.8"/></svg>
<div class="a" style="left:452.4px;top:519.5px;width:1px;height:21px;background:#6a6a6a;"></div>
<svg class="a" style="left:456.3px;top:525.5px;" width="13.4" height="10" viewBox="0 0 13.4 10"><path d="M0.3 5.6 Q1.4 -1.6 3 5 Q4.6 11.6 6.2 5 Q7.8 -1.6 9.4 5 Q11 11.6 12.8 5.4" fill="none" stroke="#6ccf86" stroke-width="1.3"/></svg>
<div class="a btn" style="left:455.7px;top:544.5px;width:15.2px;height:15.6px;"></div>
<div class="a" style="left:457.6px;top:546.6px;width:11.4px;height:11.4px;background:radial-gradient(circle,#ffb4c4 0%,#e8909c 22%,#5a3c42 55%,#2c2a2a 75%);border:1.1px solid #e4e4e4;"></div>
<svg class="a" style="left:13.8px;top:569.4px;" width="10" height="10" viewBox="0 0 10 10"><circle cx="5" cy="5" r="4" fill="none" stroke="#8e8e8e" stroke-width="1"/></svg>
<div class="a" style="left:30px;top:566.9px;height:16px;line-height:16px;font-size:12px;color:#e4e4e4;white-space:nowrap;letter-spacing:0.165px;">Motion Blur</div>
<div class="a" style="left:177.6px;top:567.2px;width:192.6px;height:14.2px;background:#505050;border-radius:2.5px;"></div>
<div class="a" style="left:180px;top:566.9px;height:16px;line-height:16px;font-size:12px;color:#e4e4e4;white-space:nowrap;letter-spacing:-0.172px;">None</div>
<svg class="a" style="left:358px;top:571.9px;" width="9" height="6" viewBox="0 0 9 6"><path d="M0.5 0.8 L4.5 4.8 L8.5 0.8" fill="none" stroke="#ddd" stroke-width="1.1"/></svg>
<svg class="a" style="left:13.8px;top:596.3px;" width="10" height="10" viewBox="0 0 10 10"><circle cx="5" cy="5" r="4" fill="none" stroke="#8e8e8e" stroke-width="1"/></svg>
<div class="a" style="left:30px;top:593.8px;height:16px;line-height:16px;font-size:12px;color:#e4e4e4;white-space:nowrap;letter-spacing:-0.169px;">Shrink</div>
<div class="a" style="left:177px;top:592.8px;width:94px;height:15.5px;background:#2b2b2b;border-radius:3px;"></div><div class="a" style="left:181px;top:593.9px;height:16px;line-height:16px;font-size:12px;color:#777;white-space:nowrap;">X</div><div class="a" style="left:194px;top:594.0px;height:16px;line-height:16px;font-size:12px;color:#e4e4e4;white-space:nowrap;">0</div>
<div class="a" style="left:277px;top:592.8px;width:94px;height:15.5px;background:#2b2b2b;border-radius:3px;"></div><div class="a" style="left:281px;top:593.9px;height:16px;line-height:16px;font-size:12px;color:#777;white-space:nowrap;">Y</div><div class="a" style="left:294px;top:594.0px;height:16px;line-height:16px;font-size:12px;color:#e4e4e4;white-space:nowrap;">0</div>
<div class="a" style="left:494px;top:85px;width:30px;height:535px;background:#444444;"></div>
<div class="a" style="left:503px;top:89.3px;width:2px;height:2px;background:#7c7c7c;"></div>
<div class="a" style="left:508.2px;top:89.3px;width:2px;height:2px;background:#7c7c7c;"></div>
<div class="a" style="left:513.4px;top:89.3px;width:2px;height:2px;background:#7c7c7c;"></div>
<div class="a" style="left:495px;top:96px;width:27.7px;height:27.5px;background:#2a2a2a;border-radius:4px;"></div>
<svg width="0" height="0" style="position:absolute"><defs><linearGradient id="tg" x1="0" y1="0" x2="0" y2="1"><stop offset="0" stop-color="#ffffff"/><stop offset="1" stop-color="#c4c4c4"/></linearGradient></defs></svg>
<svg class="a" style="left:494px;top:94.6px;" width="30" height="30" viewBox="0 0 30 30"><path d="M10.2 5 V22.2 L13.2 19.8 L15.8 24.2 L19.2 22.4 L16.6 18.2 L22.6 17 Z" fill="none" stroke="#2ecc71" stroke-width="1.3" stroke-linejoin="miter"/></svg>
<svg class="a" style="left:494px;top:125px;" width="30" height="30" viewBox="0 0 30 30"><path d="M10 5 L23.9 17.9 L15.2 19.2 L10 24.8 Z" fill="url(#tg)"/></svg>
<svg class="a" style="left:494px;top:155px;" width="30" height="30" viewBox="0 0 30 30"><g transform="rotate(-42 15 15)"><path d="M15 1.6 L20.6 12.6 L18.8 19.2 H11.2 L9.4 12.6 Z" fill="url(#tg)"/><path d="M15 3 V11.6" stroke="#444" stroke-width="1"/><circle cx="15" cy="13" r="1.5" fill="#444"/><rect x="10.6" y="20.4" width="8.8" height="3.6" fill="url(#tg)"/></g></svg>
<svg class="a" style="left:494px;top:185px;" width="30" height="30" viewBox="0 0 30 30"><g transform="rotate(43.5 15 15)"><rect x="13.2" y="4.8" width="3.6" height="17.4" fill="url(#tg)"/><path d="M13.2 23 H16.8 L15 27.4 Z" fill="#d0d0d0"/><rect x="13.2" y="1.4" width="3.6" height="2.8" rx="1.6" fill="#f4f4f4"/></g></svg>
<svg class="a" style="left:494px;top:214.6px;" width="30" height="30" viewBox="0 0 30 30"><rect x="5" y="9.2" width="12.4" height="12" rx="1.4" fill="url(#tg)"/><rect x="7.2" y="7.6" width="7.4" height="1.1" fill="#f0f0f0"/><path d="M18 15.2 L25.3 10.1 V20.6 Z" fill="url(#tg)"/><circle cx="8.3" cy="12.5" r="1.3" fill="#444"/></svg>
<svg class="a" style="left:494px;top:245px;" width="30" height="30" viewBox="0 0 30 30"><path d="M6.9 23.4 L22.9 7.8" stroke="#e8e8e8" stroke-width="1.15"/></svg>
<svg class="a" style="left:494px;top:274.7px;" width="30" height="30" viewBox="0 0 30 30"><path d="M7.6 7.2 H22.4 V10.9 H17 V23.5 H12.8 V10.9 H7.6 Z" fill="url(#tg)"/></svg>
<svg class="a" style="left:494px;top:305px;" width="30" height="30" viewBox="0 0 30 30"><path d="M8 5.8 L16.8 13.6 L11.6 14 L8 18.4 Z" fill="url(#tg)"/><path d="M13.4 7 L21 6.4 M21.6 7.6 L24 22.4 M23 23.2 L9 23.2" fill="none" stroke="#dcdcdc" stroke-width="0.9"/><rect x="20.2" y="5.2" width="2.2" height="2.2" fill="#fff"/><rect x="23" y="22" width="2.4" height="2.4" fill="#fff"/><rect x="6.8" y="22" width="2.4" height="2.4" fill="#fff"/></svg>
<svg class="a" style="left:494px;top:334.8px;" width="30" height="30" viewBox="0 0 30 30"><rect x="7.8" y="7.8" width="14.4" height="14.4" fill="url(#tg)"/></svg>
<svg class="a" style="left:494px;top:365px;" width="30" height="30" viewBox="0 0 30 30"><circle cx="15" cy="15" r="8.1" fill="url(#tg)"/></svg>
<svg class="a" style="left:494px;top:394px;" width="30" height="30" viewBox="0 0 30 30"><path d="M15 6.2 L23.8 12.8 L20.4 23 H9.6 L6.2 12.8 Z" fill="url(#tg)"/></svg>
<svg class="a" style="left:494px;top:424.7px;" width="30" height="30" viewBox="0 0 30 30"><path d="M15 5.6 L17.4 12.4 L24.6 12.6 L18.9 17 L20.9 23.9 L15 19.8 L9.1 23.9 L11.1 17 L5.4 12.6 L12.6 12.4 Z" fill="url(#tg)"/></svg>
<svg class="a" style="left:494px;top:455px;" width="30" height="30" viewBox="0 0 30 30"><path d="M18.6 21.2 A7 7 0 1 1 21.9 13.6" fill="none" stroke="url(#tg)" stroke-width="3"/></svg>
<svg class="a" style="left:494px;top:484.6px;" width="30" height="30" viewBox="0 0 30 30"><path d="M15 5.6 Q16.2 13.8 24.4 15 Q16.2 16.2 15 24.4 Q13.8 16.2 5.6 15 Q13.8 13.8 15 5.6 Z" fill="url(#tg)"/></svg>
<svg class="a" style="left:494px;top:515px;" width="30" height="30" viewBox="0 0 30 30"><g transform="translate(15 15)"><rect x="-1.9" y="-9.2" width="3.8" height="4" transform="rotate(0)" fill="url(#tg)"/><rect x="-1.9" y="-9.2" width="3.8" height="4" transform="rotate(45)" fill="url(#tg)"/><rect x="-1.9" y="-9.2" width="3.8" height="4" transform="rotate(90)" fill="url(#tg)"/><rect x="-1.9" y="-9.2" width="3.8" height="4" transform="rotate(135)" fill="url(#tg)"/><rect x="-1.9" y="-9.2" width="3.8" height="4" transform="rotate(180)" fill="url(#tg)"/><rect x="-1.9" y="-9.2" width="3.8" height="4" transform="rotate(225)" fill="url(#tg)"/><rect x="-1.9" y="-9.2" width="3.8" height="4" transform="rotate(270)" fill="url(#tg)"/><rect x="-1.9" y="-9.2" width="3.8" height="4" transform="rotate(315)" fill="url(#tg)"/><circle r="5.2" fill="none" stroke="#e4e4e4" stroke-width="3.2"/></g></svg>
<svg class="a" style="left:494px;top:544.8px;" width="30" height="30" viewBox="0 0 30 30"><path d="M4 15 L10.4 9.4 V13.2 H19.6 V9.4 L26 15 L19.6 20.6 V16.8 H10.4 V20.6 Z" fill="url(#tg)"/></svg>
<svg class="a" style="left:502.5px;top:605.3px;" width="13" height="11" viewBox="0 0 13 11"><path d="M0.8 0.8 L5.6 5.5 L0.8 10.2 M6.6 0.8 L11.4 5.5 L6.6 10.2" fill="none" stroke="#a8a8a8" stroke-width="1.1"/></svg>
<div class="a" style="left:530px;top:85px;width:1057px;height:1.4px;background:#2ecc71;"></div>
<div class="a" style="left:530px;top:86.4px;width:86.7px;height:20.6px;background:#444444;"></div>
<div class="a" style="left:535.5px;top:88.5px;height:16px;line-height:16px;font-size:12px;color:#e4e4e4;white-space:nowrap;letter-spacing:-0.054px;">Composition 2</div>
<div class="a" style="left:530px;top:107px;width:1057px;height:513px;background:#464646;"></div>
<div class="a" style="left:550px;top:127px;width:1037px;height:471px;background:#000;"></div>
<div class="a" style="left:550px;top:127px;width:1037px;height:471px;overflow:hidden;"><div class="a" style="left:148.80px;top:0;width:1.2px;height:471px;background:#343434"></div><div class="a" style="left:165.51px;top:0;width:1.2px;height:471px;background:#343434"></div><div class="a" style="left:182.22px;top:0;width:1.2px;height:471px;background:#343434"></div><div class="a" style="left:198.92px;top:0;width:1.2px;height:471px;background:#343434"></div><div class="a" style="left:215.63px;top:0;width:1.2px;height:471px;background:#343434"></div><div class="a" style="left:232.34px;top:0;width:1.2px;height:471px;background:#343434"></div><div class="a" style="left:249.05px;top:0;width:1.2px;height:471px;background:#343434"></div><div class="a" style="left:265.76px;top:0;width:1.2px;height:471px;background:#343434"></div><div class="a" style="left:282.46px;top:0;width:1.2px;height:471px;background:#343434"></div><div class="a" style="left:299.17px;top:0;width:1.2px;height:471px;background:#343434"></div><div class="a" style="left:315.88px;top:0;width:1.2px;height:471px;background:#343434"></div><div class="a" style="left:332.59px;top:0;width:1.2px;height:471px;background:#343434"></div><div class="a" style="left:349.30px;top:0;width:1.2px;height:471px;background:#343434"></div><div class="a" style="left:366.00px;top:0;width:1.2px;height:471px;background:#343434"></div><div class="a" style="left:382.71px;top:0;width:1.2px;height:471px;background:#343434"></div><div class="a" style="left:399.42px;top:0;width:1.2px;height:471px;background:#343434"></div><div class="a" style="left:416.13px;top:0;width:1.2px;height:471px;background:#343434"></div><div class="a" style="left:432.84px;top:0;width:1.2px;height:471px;background:#343434"></div><div class="a" style="left:449.54px;top:0;width:1.2px;height:471px;background:#343434"></div><div class="a" style="left:466.25px;top:0;width:1.2px;height:471px;background:#343434"></div><div class="a" style="left:482.96px;top:0;width:1.2px;height:471px;background:#343434"></div><div class="a" style="left:499.67px;top:0;width:1.2px;height:471px;background:#343434"></div><div class="a" style="left:516.38px;top:0;width:1.2px;height:471px;background:#343434"></div><div class="a" style="left:533.08px;top:0;width:1.2px;height:471px;background:#343434"></div><div class="a" style="left:549.79px;top:0;width:1.2px;height:471px;background:#343434"></div><div class="a" style="left:566.50px;top:0;width:1.2px;height:471px;background:#343434"></div><div class="a" style="left:583.21px;top:0;width:1.2px;height:471px;background:#343434"></div><div class="a" style="left:599.92px;top:0;width:1.2px;height:471px;background:#343434"></div><div class="a" style="left:616.62px;top:0;width:1.2px;height:471px;background:#343434"></div><div class="a" style="left:633.33px;top:0;width:1.2px;height:471px;background:#343434"></div><div class="a" style="left:650.04px;top:0;width:1.2px;height:471px;background:#343434"></div><div class="a" style="left:666.75px;top:0;width:1.2px;height:471px;background:#343434"></div><div class="a" style="left:683.46px;top:0;width:1.2px;height:471px;background:#343434"></div><div class="a" style="left:700.16px;top:0;width:1.2px;height:471px;background:#343434"></div><div class="a" style="left:716.87px;top:0;width:1.2px;height:471px;background:#343434"></div><div class="a" style="left:733.58px;top:0;width:1.2px;height:471px;background:#343434"></div><div class="a" style="left:750.29px;top:0;width:1.2px;height:471px;background:#343434"></div><div class="a" style="left:767.00px;top:0;width:1.2px;height:471px;background:#343434"></div><div class="a" style="left:783.70px;top:0;width:1.2px;height:471px;background:#343434"></div><div class="a" style="left:800.41px;top:0;width:1.2px;height:471px;background:#343434"></div><div class="a" style="left:817.12px;top:0;width:1.2px;height:471px;background:#343434"></div><div class="a" style="left:833.83px;top:0;width:1.2px;height:471px;background:#343434"></div><div class="a" style="left:850.54px;top:0;width:1.2px;height:471px;background:#343434"></div><div class="a" style="left:867.24px;top:0;width:1.2px;height:471px;background:#343434"></div><div class="a" style="left:883.95px;top:0;width:1.2px;height:471px;background:#343434"></div><div class="a" style="left:900.66px;top:0;width:1.2px;height:471px;background:#343434"></div><div class="a" style="left:917.37px;top:0;width:1.2px;height:471px;background:#343434"></div><div class="a" style="left:934.08px;top:0;width:1.2px;height:471px;background:#343434"></div><div class="a" style="left:950.78px;top:0;width:1.2px;height:471px;background:#343434"></div><div class="a" style="left:967.49px;top:0;width:1.2px;height:471px;background:#343434"></div><div class="a" style="left:148.80px;top:478.60px;width:819.89px;height:1.2px;background:#343434"></div><div class="a" style="left:148.80px;top:461.90px;width:819.89px;height:1.2px;background:#343434"></div><div class="a" style="left:148.80px;top:445.20px;width:819.89px;height:1.2px;background:#343434"></div><div class="a" style="left:148.80px;top:428.50px;width:819.89px;height:1.2px;background:#343434"></div><div class="a" style="left:148.80px;top:411.80px;width:819.89px;height:1.2px;background:#343434"></div><div class="a" style="left:148.80px;top:395.10px;width:819.89px;height:1.2px;background:#343434"></div><div class="a" style="left:148.80px;top:378.40px;width:819.89px;height:1.2px;background:#343434"></div><div class="a" style="left:148.80px;top:361.70px;width:819.89px;height:1.2px;background:#343434"></div><div class="a" style="left:148.80px;top:345.00px;width:819.89px;height:1.2px;background:#343434"></div><div class="a" style="left:148.80px;top:328.30px;width:819.89px;height:1.2px;background:#343434"></div><div class="a" style="left:148.80px;top:311.60px;width:819.89px;height:1.2px;background:#343434"></div><div class="a" style="left:148.80px;top:294.90px;width:819.89px;height:1.2px;background:#343434"></div><div class="a" style="left:148.80px;top:278.20px;width:819.89px;height:1.2px;background:#343434"></div><div class="a" style="left:148.80px;top:261.50px;width:819.89px;height:1.2px;background:#343434"></div><div class="a" style="left:148.80px;top:244.80px;width:819.89px;height:1.2px;background:#343434"></div><div class="a" style="left:148.80px;top:228.10px;width:819.89px;height:1.2px;background:#343434"></div><div class="a" style="left:148.80px;top:211.40px;width:819.89px;height:1.2px;background:#343434"></div><div class="a" style="left:148.80px;top:194.70px;width:819.89px;height:1.2px;background:#343434"></div><div class="a" style="left:148.80px;top:178.00px;width:819.89px;height:1.2px;background:#343434"></div><div class="a" style="left:148.80px;top:161.30px;width:819.89px;height:1.2px;background:#343434"></div><div class="a" style="left:148.80px;top:144.60px;width:819.89px;height:1.2px;background:#343434"></div><div class="a" style="left:148.80px;top:127.90px;width:819.89px;height:1.2px;background:#343434"></div><div class="a" style="left:148.80px;top:111.20px;width:819.89px;height:1.2px;background:#343434"></div><div class="a" style="left:148.80px;top:94.50px;width:819.89px;height:1.2px;background:#343434"></div><div class="a" style="left:148.80px;top:77.80px;width:819.89px;height:1.2px;background:#343434"></div><div class="a" style="left:148.80px;top:61.10px;width:819.89px;height:1.2px;background:#343434"></div><div class="a" style="left:148.80px;top:44.40px;width:819.89px;height:1.2px;background:#343434"></div><div class="a" style="left:148.80px;top:27.70px;width:819.89px;height:1.2px;background:#343434"></div><div class="a" style="left:148.80px;top:11.00px;width:819.89px;height:1.2px;background:#343434"></div><div class="a" style="left:148.80px;top:-5.70px;width:819.89px;height:1.2px;background:#343434"></div><div class="a" style="left:157.30px;top:-3.00px;width:803.00px;height:452.00px;background:#646464;border:1.4px solid #34c574;"></div><div class="a" style="left:154.50px;top:-3px;width:7px;height:3.8px;background:#34c574;"></div><div class="a" style="left:956.10px;top:-3px;width:7px;height:3.8px;background:#34c574;"></div><div class="a" style="left:154.60px;top:445.00px;width:6.8px;height:6.6px;background:#fff;border:0.8px solid #34c574;"></div><div class="a" style="left:956.20px;top:445.00px;width:6.8px;height:6.6px;background:#fff;border:0.8px solid #34c574;"></div><svg class="a" style="left:552.80px;top:216.60px" width="12" height="12"><circle cx="6" cy="6" r="4" fill="none" stroke="#474747" stroke-width="0.9"/><circle cx="6" cy="6" r="0.9" fill="#3c3c3c"/></svg><div class="a" style="left:19.399999999999977px;top:372.7px;height:16px;line-height:16px;font-size:12px;white-space:nowrap;color:#fff;"><span style="letter-spacing:-0.369px;-webkit-text-stroke:0.3px #fff">Hold S</span><span style="color:rgba(70,70,70,0.86);letter-spacing:-0.062px;margin-left:2.6px">Direct Layer Selection</span></div><div class="a" style="left:19.399999999999977px;top:386.70000000000005px;height:16px;line-height:16px;font-size:12px;white-space:nowrap;color:#fff;"><span style="letter-spacing:-0.683px;-webkit-text-stroke:0.3px #fff">Space</span><span style="color:rgba(70,70,70,0.86);letter-spacing:-0.167px;margin-left:2.6px">Play/ Stop</span></div><div class="a" style="left:19.399999999999977px;top:400.70000000000005px;height:16px;line-height:16px;font-size:12px;white-space:nowrap;color:#fff;"><span style="letter-spacing:-0.361px;-webkit-text-stroke:0.3px #fff">Space + click + drag</span><span style="color:rgba(70,70,70,0.86);letter-spacing:-0.615px;margin-left:2.6px">Pan</span></div><div class="a" style="left:19.399999999999977px;top:414.70000000000005px;height:16px;line-height:16px;font-size:12px;white-space:nowrap;color:#fff;"><span style="letter-spacing:-0.134px;-webkit-text-stroke:0.3px #fff">Alt + click + drag</span><span style="color:rgba(70,70,70,0.86);letter-spacing:-0.001px;margin-left:2.6px">Move Pivot Point</span></div><div class="a" style="left:19.399999999999977px;top:428.70000000000005px;height:16px;line-height:16px;font-size:12px;white-space:nowrap;color:#fff;"><span style="letter-spacing:0.100px;-webkit-text-stroke:0.3px #fff">Shift</span><span style="color:rgba(70,70,70,0.86);letter-spacing:-0.359px;margin-left:2.6px">Enable Snapping</span></div><div class="a" style="left:448.1px;top:448.79999999999995px;height:16px;line-height:16px;font-size:12px;white-space:nowrap;color:#fff;letter-spacing:0.092px;text-shadow:0 0 1px #000,0 0 1px #000,1px 1px 0 #000,-1px -1px 0 #000,1px -1px 0 #000,-1px 1px 0 #000;">Viewport Quality: High</div></div>
<div class="a" style="left:535.7px;top:109.2px;height:16px;line-height:16px;font-size:10.5px;color:#c4c4c4;white-space:nowrap;">px</div>
<svg class="a" style="left:530px;top:107px;shape-rendering:crispEdges;" width="1057" height="20" viewBox="0 0 1057 20"><rect x="27" y="16" width="1" height="4" fill="#bcbcbc"/><rect x="40" y="16" width="1" height="4" fill="#bcbcbc"/><rect x="52" y="16" width="1" height="4" fill="#bcbcbc"/><rect x="65" y="16" width="1" height="4" fill="#bcbcbc"/><rect x="77" y="12" width="1" height="8" fill="#c6c6c6"/><rect x="90" y="16" width="1" height="4" fill="#bcbcbc"/><rect x="103" y="16" width="1" height="4" fill="#bcbcbc"/><rect x="115" y="16" width="1" height="4" fill="#bcbcbc"/><rect x="128" y="16" width="1" height="4" fill="#bcbcbc"/><rect x="140" y="12" width="1" height="8" fill="#c6c6c6"/><rect x="153" y="16" width="1" height="4" fill="#bcbcbc"/><rect x="165" y="16" width="1" height="4" fill="#bcbcbc"/><rect x="178" y="16" width="1" height="4" fill="#bcbcbc"/><rect x="190" y="16" width="1" height="4" fill="#bcbcbc"/><rect x="203" y="12" width="1" height="8" fill="#c6c6c6"/><rect x="215" y="16" width="1" height="4" fill="#bcbcbc"/><rect x="228" y="16" width="1" height="4" fill="#bcbcbc"/><rect x="241" y="16" width="1" height="4" fill="#bcbcbc"/><rect x="253" y="16" width="1" height="4" fill="#bcbcbc"/><rect x="266" y="12" width="1" height="8" fill="#c6c6c6"/><rect x="278" y="16" width="1" height="4" fill="#bcbcbc"/><rect x="291" y="16" width="1" height="4" fill="#bcbcbc"/><rect x="303" y="16" width="1" height="4" fill="#bcbcbc"/><rect x="316" y="16" width="1" height="4" fill="#bcbcbc"/><rect x="328" y="12" width="1" height="8" fill="#c6c6c6"/><rect x="341" y="16" width="1" height="4" fill="#bcbcbc"/><rect x="353" y="16" width="1" height="4" fill="#bcbcbc"/><rect x="366" y="16" width="1" height="4" fill="#bcbcbc"/><rect x="378" y="16" width="1" height="4" fill="#bcbcbc"/><rect x="391" y="12" width="1" height="8" fill="#c6c6c6"/><rect x="404" y="16" width="1" height="4" fill="#bcbcbc"/><rect x="416" y="16" width="1" height="4" fill="#bcbcbc"/><rect x="429" y="16" width="1" height="4" fill="#bcbcbc"/><rect x="441" y="16" width="1" height="4" fill="#bcbcbc"/><rect x="454" y="12" width="1" height="8" fill="#c6c6c6"/><rect x="466" y="16" width="1" height="4" fill="#bcbcbc"/><rect x="479" y="16" width="1" height="4" fill="#bcbcbc"/><rect x="491" y="16" width="1" height="4" fill="#bcbcbc"/><rect x="504" y="16" width="1" height="4" fill="#bcbcbc"/><rect x="516" y="12" width="1" height="8" fill="#c6c6c6"/><rect x="529" y="16" width="1" height="4" fill="#bcbcbc"/><rect x="541" y="16" width="1" height="4" fill="#bcbcbc"/><rect x="554" y="16" width="1" height="4" fill="#bcbcbc"/><rect x="567" y="16" width="1" height="4" fill="#bcbcbc"/><rect x="579" y="12" width="1" height="8" fill="#c6c6c6"/><rect x="592" y="16" width="1" height="4" fill="#bcbcbc"/><rect x="604" y="16" width="1" height="4" fill="#bcbcbc"/><rect x="617" y="16" width="1" height="4" fill="#bcbcbc"/><rect x="629" y="16" width="1" height="4" fill="#bcbcbc"/><rect x="642" y="12" width="1" height="8" fill="#c6c6c6"/><rect x="654" y="16" width="1" height="4" fill="#bcbcbc"/><rect x="667" y="16" width="1" height="4" fill="#bcbcbc"/><rect x="679" y="16" width="1" height="4" fill="#bcbcbc"/><rect x="692" y="16" width="1" height="4" fill="#bcbcbc"/><rect x="705" y="12" width="1" height="8" fill="#c6c6c6"/><rect x="717" y="16" width="1" height="4" fill="#bcbcbc"/><rect x="730" y="16" width="1" height="4" fill="#bcbcbc"/><rect x="742" y="16" width="1" height="4" fill="#bcbcbc"/><rect x="755" y="16" width="1" height="4" fill="#bcbcbc"/><rect x="767" y="12" width="1" height="8" fill="#c6c6c6"/><rect x="780" y="16" width="1" height="4" fill="#bcbcbc"/><rect x="792" y="16" width="1" height="4" fill="#bcbcbc"/><rect x="805" y="16" width="1" height="4" fill="#bcbcbc"/><rect x="817" y="16" width="1" height="4" fill="#bcbcbc"/><rect x="830" y="12" width="1" height="8" fill="#c6c6c6"/><rect x="842" y="16" width="1" height="4" fill="#bcbcbc"/><rect x="855" y="16" width="1" height="4" fill="#bcbcbc"/><rect x="868" y="16" width="1" height="4" fill="#bcbcbc"/><rect x="880" y="16" width="1" height="4" fill="#bcbcbc"/><rect x="893" y="12" width="1" height="8" fill="#c6c6c6"/><rect x="905" y="16" width="1" height="4" fill="#bcbcbc"/><rect x="918" y="16" width="1" height="4" fill="#bcbcbc"/><rect x="930" y="16" width="1" height="4" fill="#bcbcbc"/><rect x="943" y="16" width="1" height="4" fill="#bcbcbc"/><rect x="955" y="12" width="1" height="8" fill="#c6c6c6"/><rect x="968" y="16" width="1" height="4" fill="#bcbcbc"/><rect x="980" y="16" width="1" height="4" fill="#bcbcbc"/><rect x="993" y="16" width="1" height="4" fill="#bcbcbc"/><rect x="1005" y="16" width="1" height="4" fill="#bcbcbc"/><rect x="1018" y="12" width="1" height="8" fill="#c6c6c6"/><rect x="1031" y="16" width="1" height="4" fill="#bcbcbc"/><rect x="1043" y="16" width="1" height="4" fill="#bcbcbc"/><rect x="1056" y="16" width="1" height="4" fill="#bcbcbc"/></svg>
<div class="a" style="left:608.3999999999999px;top:107.8px;height:12px;line-height:12px;font-size:10.5px;color:#cfcfcf;white-space:nowrap;transform:translateX(-50%);letter-spacing:-0.1px;">-1200</div>
<div class="a" style="left:671.0999999999998px;top:107.8px;height:12px;line-height:12px;font-size:10.5px;color:#cfcfcf;white-space:nowrap;transform:translateX(-50%);letter-spacing:-0.1px;">-1050</div>
<div class="a" style="left:733.7999999999998px;top:107.8px;height:12px;line-height:12px;font-size:10.5px;color:#cfcfcf;white-space:nowrap;transform:translateX(-50%);letter-spacing:-0.1px;">-900</div>
<div class="a" style="left:796.4999999999999px;top:107.8px;height:12px;line-height:12px;font-size:10.5px;color:#cfcfcf;white-space:nowrap;transform:translateX(-50%);letter-spacing:-0.1px;">-750</div>
<div class="a" style="left:859.1999999999999px;top:107.8px;height:12px;line-height:12px;font-size:10.5px;color:#cfcfcf;white-space:nowrap;transform:translateX(-50%);letter-spacing:-0.1px;">-600</div>
<div class="a" style="left:921.8999999999999px;top:107.8px;height:12px;line-height:12px;font-size:10.5px;color:#cfcfcf;white-space:nowrap;transform:translateX(-50%);letter-spacing:-0.1px;">-450</div>
<div class="a" style="left:984.5999999999999px;top:107.8px;height:12px;line-height:12px;font-size:10.5px;color:#cfcfcf;white-space:nowrap;transform:translateX(-50%);letter-spacing:-0.1px;">-300</div>
<div class="a" style="left:1047.3px;top:107.8px;height:12px;line-height:12px;font-size:10.5px;color:#cfcfcf;white-space:nowrap;transform:translateX(-50%);letter-spacing:-0.1px;">-150</div>
<div class="a" style="left:1110.0px;top:107.8px;height:12px;line-height:12px;font-size:10.5px;color:#cfcfcf;white-space:nowrap;transform:translateX(-50%);letter-spacing:-0.1px;">0</div>
<div class="a" style="left:1172.7px;top:107.8px;height:12px;line-height:12px;font-size:10.5px;color:#cfcfcf;white-space:nowrap;transform:translateX(-50%);letter-spacing:-0.1px;">150</div>
<div class="a" style="left:1235.4px;top:107.8px;height:12px;line-height:12px;font-size:10.5px;color:#cfcfcf;white-space:nowrap;transform:translateX(-50%);letter-spacing:-0.1px;">300</div>
<div class="a" style="left:1298.1px;top:107.8px;height:12px;line-height:12px;font-size:10.5px;color:#cfcfcf;white-space:nowrap;transform:translateX(-50%);letter-spacing:-0.1px;">450</div>
<div class="a" style="left:1360.8px;top:107.8px;height:12px;line-height:12px;font-size:10.5px;color:#cfcfcf;white-space:nowrap;transform:translateX(-50%);letter-spacing:-0.1px;">600</div>
<div class="a" style="left:1423.5px;top:107.8px;height:12px;line-height:12px;font-size:10.5px;color:#cfcfcf;white-space:nowrap;transform:translateX(-50%);letter-spacing:-0.1px;">750</div>
<div class="a" style="left:1486.2px;top:107.8px;height:12px;line-height:12px;font-size:10.5px;color:#cfcfcf;white-space:nowrap;transform:translateX(-50%);letter-spacing:-0.1px;">900</div>
<div class="a" style="left:1548.9px;top:107.8px;height:12px;line-height:12px;font-size:10.5px;color:#cfcfcf;white-space:nowrap;transform:translateX(-50%);letter-spacing:-0.1px;">1050</div>
<svg class="a" style="left:530px;top:127px;shape-rendering:crispEdges;" width="20" height="471" viewBox="0 0 20 471"><rect x="16" y="461" width="4" height="1" fill="#bcbcbc"/><rect x="16" y="449" width="4" height="1" fill="#bcbcbc"/><rect x="16" y="436" width="4" height="1" fill="#bcbcbc"/><rect x="16" y="423" width="4" height="1" fill="#bcbcbc"/><rect x="12" y="411" width="8" height="1" fill="#c6c6c6"/><rect x="16" y="398" width="4" height="1" fill="#bcbcbc"/><rect x="16" y="386" width="4" height="1" fill="#bcbcbc"/><rect x="16" y="373" width="4" height="1" fill="#bcbcbc"/><rect x="16" y="361" width="4" height="1" fill="#bcbcbc"/><rect x="12" y="348" width="8" height="1" fill="#c6c6c6"/><rect x="16" y="336" width="4" height="1" fill="#bcbcbc"/><rect x="16" y="323" width="4" height="1" fill="#bcbcbc"/><rect x="16" y="311" width="4" height="1" fill="#bcbcbc"/><rect x="16" y="298" width="4" height="1" fill="#bcbcbc"/><rect x="12" y="286" width="8" height="1" fill="#c6c6c6"/><rect x="16" y="273" width="4" height="1" fill="#bcbcbc"/><rect x="16" y="260" width="4" height="1" fill="#bcbcbc"/><rect x="16" y="248" width="4" height="1" fill="#bcbcbc"/><rect x="16" y="235" width="4" height="1" fill="#bcbcbc"/><rect x="12" y="223" width="8" height="1" fill="#c6c6c6"/><rect x="16" y="210" width="4" height="1" fill="#bcbcbc"/><rect x="16" y="198" width="4" height="1" fill="#bcbcbc"/><rect x="16" y="185" width="4" height="1" fill="#bcbcbc"/><rect x="16" y="173" width="4" height="1" fill="#bcbcbc"/><rect x="12" y="160" width="8" height="1" fill="#c6c6c6"/><rect x="16" y="148" width="4" height="1" fill="#bcbcbc"/><rect x="16" y="135" width="4" height="1" fill="#bcbcbc"/><rect x="16" y="122" width="4" height="1" fill="#bcbcbc"/><rect x="16" y="110" width="4" height="1" fill="#bcbcbc"/><rect x="12" y="97" width="8" height="1" fill="#c6c6c6"/><rect x="16" y="85" width="4" height="1" fill="#bcbcbc"/><rect x="16" y="72" width="4" height="1" fill="#bcbcbc"/><rect x="16" y="60" width="4" height="1" fill="#bcbcbc"/><rect x="16" y="47" width="4" height="1" fill="#bcbcbc"/><rect x="12" y="35" width="8" height="1" fill="#c6c6c6"/><rect x="16" y="22" width="4" height="1" fill="#bcbcbc"/><rect x="16" y="10" width="4" height="1" fill="#bcbcbc"/></svg>
<div class="a" style="left:536.9px;top:537.8px;width:0;height:0;"><div style="position:absolute;transform:translate(-50%,-50%) rotate(-90deg);font-size:10.5px;color:#cfcfcf;white-space:nowrap;line-height:12px;letter-spacing:-0.1px;">-450</div></div>
<div class="a" style="left:536.9px;top:475.1px;width:0;height:0;"><div style="position:absolute;transform:translate(-50%,-50%) rotate(-90deg);font-size:10.5px;color:#cfcfcf;white-space:nowrap;line-height:12px;letter-spacing:-0.1px;">-300</div></div>
<div class="a" style="left:536.9px;top:412.4px;width:0;height:0;"><div style="position:absolute;transform:translate(-50%,-50%) rotate(-90deg);font-size:10.5px;color:#cfcfcf;white-space:nowrap;line-height:12px;letter-spacing:-0.1px;">-150</div></div>
<div class="a" style="left:536.9px;top:350.5px;width:0;height:0;"><div style="position:absolute;transform:translate(-50%,-50%) rotate(-90deg);font-size:10.5px;color:#cfcfcf;white-space:nowrap;line-height:12px;letter-spacing:-0.1px;">0</div></div>
<div class="a" style="left:536.9px;top:287.8px;width:0;height:0;"><div style="position:absolute;transform:translate(-50%,-50%) rotate(-90deg);font-size:10.5px;color:#cfcfcf;white-space:nowrap;line-height:12px;letter-spacing:-0.1px;">150</div></div>
<div class="a" style="left:536.9px;top:225.1px;width:0;height:0;"><div style="position:absolute;transform:translate(-50%,-50%) rotate(-90deg);font-size:10.5px;color:#cfcfcf;white-space:nowrap;line-height:12px;letter-spacing:-0.1px;">300</div></div>
<div class="a" style="left:536.9px;top:162.4px;width:0;height:0;"><div style="position:absolute;transform:translate(-50%,-50%) rotate(-90deg);font-size:10.5px;color:#cfcfcf;white-space:nowrap;line-height:12px;letter-spacing:-0.1px;">450</div></div>
<div class="a" style="left:535px;top:601.4px;width:78px;height:15.2px;background:#2a2a2a;border-radius:3px;"></div>
<div class="a" style="left:537.8px;top:601.5px;height:16px;line-height:16px;font-size:12px;color:#e4e4e4;white-space:nowrap;letter-spacing:-0.339px;">42%</div>
<svg class="a" style="left:599.5px;top:606.3px;" width="9" height="6" viewBox="0 0 9 6"><path d="M0.5 0.8 L4.5 4.8 L8.5 0.8" fill="none" stroke="#ddd" stroke-width="1.1"/></svg>
<div class="a btn" style="left:866.2px;top:599.8px;width:99.4px;height:18.8px;"></div>
<div class="a" style="left:885.7px;top:600.8px;width:1px;height:16.8px;background:#1c1c1c;"></div>
<div class="a" style="left:905.6px;top:600.8px;width:1px;height:16.8px;background:#1c1c1c;"></div>
<div class="a" style="left:925.5px;top:600.8px;width:1px;height:16.8px;background:#1c1c1c;"></div>
<div class="a" style="left:945.4px;top:600.8px;width:1px;height:16.8px;background:#1c1c1c;"></div>
<svg class="a" style="left:0;top:0" width="1920" height="1031"><defs><linearGradient id="tg2" gradientUnits="userSpaceOnUse" x1="0" y1="603" x2="0" y2="615"><stop offset="0" stop-color="#f0f0f0"/><stop offset="1" stop-color="#b4b4b4"/></linearGradient></defs><rect x="870.1" y="603.9" width="2" height="10.2" fill="url(#tg2)"/><path d="M881.2 603.9 L873.4000000000001 609 L881.2 614.1 Z" fill="url(#tg2)"/><path d="M898 603.9 L890.2 609 L898 614.1 Z" fill="url(#tg2)"/><rect x="899.8" y="603.9" width="2" height="10.2" fill="url(#tg2)"/><path d="M910.9 603.7 L919.8 609 L910.9 614.3 Z" fill="url(#tg2)"/><rect x="929.9" y="603.9" width="2" height="10.2" fill="url(#tg2)"/><path d="M933.4 603.9 L941.1999999999999 609 L933.4 614.1 Z" fill="url(#tg2)"/><path d="M951.4 603.9 L959.1999999999999 609 L951.4 614.1 Z" fill="url(#tg2)"/><rect x="959.6" y="603.9" width="2" height="10.2" fill="url(#tg2)"/></svg>
<div class="a btn" style="left:970.8px;top:599.8px;width:19.9px;height:18.8px;"></div>
<svg class="a" style="left:973.6px;top:602px;" width="15" height="14" viewBox="0 0 15 14"><path d="M4.4 5 H2 Q0.8 5 0.8 6.2 V10.4 Q0.8 11.6 2 11.6 H12.8 Q14 11.6 14 10.4 V6.2 Q14 5.6 13.6 5.3" fill="none" stroke="#e4e4e4" stroke-width="1.5"/><path d="M4.2 8 Q4.4 3.6 8.6 3.6 V1 L12.8 4.6 L8.6 8.2 V5.6 Q6 5.6 4.2 8 Z" fill="#e4e4e4"/></svg>
<div class="a" style="left:1593px;top:85px;width:40px;height:22px;background:#444444;border-radius:4px 4px 0 0;"></div>
<div class="a" style="left:1598px;top:88.5px;height:16px;line-height:16px;font-size:12px;color:#e4e4e4;white-space:nowrap;letter-spacing:0.163px;">Color</div>
<div class="a" style="left:1634px;top:85px;width:69px;height:22px;background:#2a2a2a;border-radius:4px 4px 0 0;"></div>
<div class="a" style="left:1639px;top:88.5px;height:16px;line-height:16px;font-size:12px;color:#e4e4e4;white-space:nowrap;letter-spacing:-0.219px;">Add Layers</div>
<div class="a" style="left:1593px;top:107px;width:321px;height:417.5px;background:#444444;"></div>
<div class="a" style="left:1900px;top:107px;width:14px;height:417.5px;background:#3c3c3c;"></div>
<div class="a" style="left:1902px;top:109px;width:9.6px;height:366px;background:#545454;border-radius:4.8px;"></div>
<div class="a" style="left:1645.7px;top:119.4px;width:200.4px;height:200.4px;border-radius:50%;background:conic-gradient(from 90deg,#ff0000,#ff00ff,#0000ff,#00ffff,#00ff00,#ffff00,#ff0000);-webkit-mask:radial-gradient(circle,transparent 74.4px,#000 75.4px,#000 99.7px,transparent 100.5px);mask:radial-gradient(circle,transparent 74.4px,#000 75.4px,#000 99.7px,transparent 100.5px);"></div>
<div class="a" style="left:1702px;top:175.7px;width:90.3px;height:90.3px;background:linear-gradient(to right,#000,rgba(0,0,0,0)),linear-gradient(to bottom,#fff,#ff0000);"></div>
<svg class="a" style="left:1730.2px;top:168.7px;" width="14" height="14" viewBox="0 0 14 14"><circle cx="7" cy="7" r="5.8" fill="none" stroke="#e8e8e8" stroke-width="1"/></svg>
<svg class="a" style="left:1825.8px;top:212.9px;" width="14" height="14" viewBox="0 0 14 14"><circle cx="7" cy="7" r="5.8" fill="none" stroke="#f4f4f4" stroke-width="1"/></svg>
<div class="a" style="left:1600px;top:333.1px;width:22px;height:22px;background:#646464;border-radius:3px;"></div>
<div class="a" style="left:1625.5px;top:336.5px;height:16px;line-height:16px;font-size:12px;color:#e4e4e4;white-space:nowrap;letter-spacing:-0.146px;">Dim Gray</div>
<div class="a btn" style="left:1871.3px;top:333.1px;width:21.6px;height:21.8px;"></div>
<svg class="a" style="left:1876.3px;top:338.2px;" width="12" height="12" viewBox="0 0 12 12"><path d="M8.2 1 Q9.6 -0.2 10.9 1.1 Q12.2 2.4 11 3.8 L9.4 5.4 L6.6 2.6 Z" fill="#d0d0d0"/><path d="M5.6 2.2 L9.8 6.4" stroke="#d0d0d0" stroke-width="1.6"/><path d="M6.8 4 L1.4 9.4 L0.6 11.4 L2.6 10.6 L8 5.2" fill="none" stroke="#d0d0d0" stroke-width="1"/></svg>
<div class="a" style="left:1600px;top:360.2px;width:49.7px;height:17.6px;background:#525252;border-radius:3px;border:1px solid #3c3c3c;"></div>
<div class="a" style="left:1603px;top:361.5px;height:16px;line-height:16px;font-size:12px;color:#e4e4e4;white-space:nowrap;letter-spacing:-0.115px;">Hex</div>
<svg class="a" style="left:1636.5px;top:366.5px;" width="9" height="6" viewBox="0 0 9 6"><path d="M0.5 0.8 L4.5 4.8 L8.5 0.8" fill="none" stroke="#ddd" stroke-width="1.1"/></svg>
<div class="a" style="left:1653px;top:358.5px;width:239.6px;height:21px;background:#2a2a2a;border-radius:3px;"></div>
<div class="a" style="left:1657.5px;top:361.5px;height:16px;line-height:16px;font-size:11px;color:#555;white-space:nowrap;">#</div>
<div class="a" style="left:1670px;top:361.5px;height:16px;line-height:16px;font-size:12px;color:#e4e4e4;white-space:nowrap;letter-spacing:0.328px;">646464</div>
<div class="a" style="left:1600px;top:390px;width:234px;height:4.4px;background:linear-gradient(#f0f0f0,#d4d4d4);border-radius:2.2px;"></div>
<div class="a" style="left:1828.7px;top:387px;width:10.4px;height:10.4px;background:radial-gradient(circle,#4f9f88 0,#4f9f88 1.6px,#72d2b4 2.4px);border-radius:5.2px;"></div>
<div class="a" style="left:1849px;top:384.4px;width:43.6px;height:15.2px;background:#2a2a2a;border-radius:3px;"></div>
<div class="a" style="left:1853px;top:384.9px;height:16px;line-height:16px;font-size:12px;color:#555;white-space:nowrap;">A</div>
<div class="a" style="left:1866px;top:384.9px;height:16px;line-height:16px;font-size:12px;color:#e4e4e4;white-space:nowrap;letter-spacing:0.495px;">255</div>
<div class="a" style="left:1597.3px;top:407px;width:298.2px;height:20.5px;background:#2a2a2a;"></div>
<div class="a" style="left:1599.3px;top:408px;width:147.3px;height:19.5px;background:#444444;border-radius:4px 4px 0 0;"></div>
<div class="a" style="left:1648px;top:409.8px;height:16px;line-height:16px;font-size:12px;color:#e4e4e4;white-space:nowrap;letter-spacing:-0.252px;">Swatches</div>
<div class="a" style="left:1793px;top:409.8px;height:16px;line-height:16px;font-size:12px;color:#b4b4b4;white-space:nowrap;letter-spacing:0.109px;">Generator</div>
<div class="a" style="left:1598px;top:431.2px;width:256.2px;height:17.5px;background:#555;border-radius:3px;"></div>
<div class="a" style="left:1599px;top:432px;width:61.7px;height:16px;background:#2a2a2a;border-radius:3px;"></div>
<svg class="a" style="left:1605px;top:435.2px;" width="11" height="10" viewBox="0 0 11 10"><path d="M1 0 V10 M4 0 V10 M6.6 0.3 L9.6 9.8" stroke="#2ecc71" stroke-width="1.5" fill="none"/></svg>
<div class="a" style="left:1621px;top:433.2px;height:16px;line-height:16px;font-size:12px;color:#e4e4e4;white-space:nowrap;letter-spacing:0.188px;">Library</div>
<svg class="a" style="left:1670.3px;top:434.6px;" width="11.4" height="10.6" viewBox="0 0 11.4 10.6"><path d="M1.6 0.4 H8.4 V1.4 H1.6 Z" fill="#d8d8d8"/><rect x="0.3" y="2" width="10.8" height="8.2" rx="0.8" fill="#d8d8d8"/><path d="M1.8 4.6 H3 M4.2 4.6 H9.6 M1.8 7.2 H3 M4.2 7.2 H9.6" stroke="#555" stroke-width="1.1"/></svg>
<div class="a" style="left:1686px;top:433.2px;height:16px;line-height:16px;font-size:12px;color:#e4e4e4;white-space:nowrap;letter-spacing:0.094px;">Project</div>
<svg class="a" style="left:1737.5px;top:434.5px;" width="9" height="11" viewBox="0 0 9 11"><path d="M0.6 0.6 H5.4 L8.2 3.4 V10.4 H0.6 Z M5.2 0.8 V3.6 H8" fill="none" stroke="#d8d8d8" stroke-width="1.1"/></svg>
<div class="a" style="left:1752px;top:433.2px;height:16px;line-height:16px;font-size:12px;color:#e4e4e4;white-space:nowrap;letter-spacing:-0.603px;">Scene</div>
<svg class="a" style="left:1800.5px;top:435px;" width="11" height="10" viewBox="0 0 11 10"><path d="M3.4 0.6 H8 Q10.4 0.6 10.4 3 V6 L7 9.4 H3.4 Q0.6 9.4 0.6 6.6 V3.4 Q0.6 0.6 3.4 0.6 Z M10.2 5.8 H8 Q6.8 5.8 6.8 7 V9.2" fill="none" stroke="#d8d8d8" stroke-width="1.1"/></svg>
<div class="a" style="left:1816px;top:433.2px;height:16px;line-height:16px;font-size:12px;color:#e4e4e4;white-space:nowrap;letter-spacing:-0.310px;">Labels</div>
<div class="a" style="left:1857.7px;top:431.2px;width:36.4px;height:17.5px;background:#555;border-radius:3px;"></div>
<div class="a" style="left:1857.7px;top:431.2px;width:17.6px;height:17.5px;background:#2a2a2a;border-radius:3px;"></div>
<svg class="a" style="left:1862px;top:435.5px;" width="9" height="9" viewBox="0 0 9 9"><rect x="0" y="0" width="3.6" height="3.6" rx="0.6" fill="#2ecc71"/><rect x="5.2" y="0" width="3.6" height="3.6" rx="0.6" fill="#2ecc71"/><rect x="0" y="5.2" width="3.6" height="3.6" rx="0.6" fill="#2ecc71"/><rect x="5.2" y="5.2" width="3.6" height="3.6" rx="0.6" fill="#2ecc71"/></svg>
<svg class="a" style="left:1880px;top:436px;" width="10" height="8" viewBox="0 0 10 8"><path d="M0 0.6 H10 M0 4 H10 M0 7.4 H10" stroke="#e0e0e0" stroke-width="1.1"/></svg>
<div class="a" style="left:1598px;top:452.6px;width:275.6px;height:16.6px;background:#525252;border-radius:2.5px;border:1px solid #404040;"></div>
<div class="a" style="left:1601px;top:453.8px;height:16px;line-height:16px;font-size:12px;color:#e4e4e4;white-space:nowrap;letter-spacing:-0.005px;">new</div>
<svg class="a" style="left:1860px;top:458.5px;" width="9" height="6" viewBox="0 0 9 6"><path d="M0.5 0.8 L4.5 4.8 L8.5 0.8" fill="none" stroke="#ddd" stroke-width="1.1"/></svg>
<div class="a" style="left:1880px;top:460.3px;width:2.2px;height:2.2px;background:#e4e4e4;"></div>
<div class="a" style="left:1885.3px;top:460.3px;width:2.2px;height:2.2px;background:#e4e4e4;"></div>
<div class="a" style="left:1890.6px;top:460.3px;width:2.2px;height:2.2px;background:#e4e4e4;"></div>
<div class="a" style="left:1598px;top:469.5px;width:297px;height:55px;background:#232323;"></div>
<div class="a" style="left:1600.2px;top:472px;width:18px;height:18px;background:#8c4dff;border-radius:3px;"></div>
<div class="a" style="left:1622.2px;top:472px;width:18px;height:18px;background:#4da3ff;border-radius:3px;"></div>
<div class="a" style="left:1644.2px;top:472px;width:18px;height:18px;background:#ff7a52;border-radius:3px;"></div>
<div class="a" style="left:1666.2px;top:472px;width:18px;height:18px;background:#50fcae;border-radius:3px;"></div>
<div class="a" style="left:1688.2px;top:472px;width:18px;height:18px;background:#ff4d5e;border-radius:3px;"></div>
<div class="a" style="left:1710.2px;top:472px;width:18px;height:18px;background:#ff4dbc;border-radius:3px;"></div>
<div class="a" style="left:1732.2px;top:472px;width:18px;height:18px;background:#ffd24d;border-radius:3px;"></div>
<div class="a" style="left:1754.2px;top:472px;width:18px;height:18px;background:#4262d6;border-radius:3px;"></div>
<div class="a" style="left:1776.2px;top:472px;width:18px;height:18px;background:#52e6d2;border-radius:3px;"></div>
<div class="a" style="left:1798.2px;top:472px;width:18px;height:18px;background:#da7ed8;border-radius:3px;"></div>
<div class="a" style="left:1820.2px;top:472px;width:18px;height:18px;background:#b0ec8a;border-radius:3px;"></div>
<div class="a" style="left:1842.2px;top:472px;width:18px;height:18px;background:#6a4dff;border-radius:3px;"></div>
<div class="a" style="left:1593px;top:530px;width:37.7px;height:22px;background:#444444;border-radius:4px 4px 0 0;"></div>
<div class="a" style="left:1598px;top:534.0px;height:16px;line-height:16px;font-size:12px;color:#e4e4e4;white-space:nowrap;letter-spacing:0.163px;">Align</div>
<div class="a" style="left:1593px;top:551.7px;width:321px;height:68.3px;background:#444444;"></div>
<div class="a" style="left:1601px;top:563.8px;height:16px;line-height:16px;font-size:12px;color:#e4e4e4;white-space:nowrap;letter-spacing:0.127px;">Alignment</div>
<div class="a" style="left:1601px;top:592.3px;height:16px;line-height:16px;font-size:12px;color:#e4e4e4;white-space:nowrap;letter-spacing:0.289px;">Distribution</div>
<div class="a btn" style="left:1790.8px;top:563px;width:52.4px;height:16.7px;"></div><div class="a" style="left:1808.2666666666667px;top:564px;width:1px;height:14.7px;background:#1c1c1c;"></div><div class="a" style="left:1825.7333333333333px;top:564px;width:1px;height:14.7px;background:#1c1c1c;"></div>
<div class="a btn" style="left:1852.5px;top:563px;width:52.4px;height:16.7px;"></div><div class="a" style="left:1869.9666666666667px;top:564px;width:1px;height:14.7px;background:#1c1c1c;"></div><div class="a" style="left:1887.4333333333334px;top:564px;width:1px;height:14.7px;background:#1c1c1c;"></div>
<div class="a btn" style="left:1790.8px;top:590.5px;width:52.4px;height:16.7px;"></div><div class="a" style="left:1808.2666666666667px;top:591.5px;width:1px;height:14.7px;background:#1c1c1c;"></div><div class="a" style="left:1825.7333333333333px;top:591.5px;width:1px;height:14.7px;background:#1c1c1c;"></div>
<svg class="a" style="left:1794px;top:565.3px;" width="12" height="12" viewBox="0 0 12 12"><path d="M0.8 -0.6 V12.6" stroke="#ececec" stroke-width="1"/><path d="M3 3.4 H8.6 M3 8.6 H12.4" stroke="#ececec" stroke-width="2.1"/></svg>
<svg class="a" style="left:1811.2px;top:565.3px;" width="12" height="12" viewBox="0 0 12 12"><path d="M6.2 -0.6 V12.6" stroke="#ececec" stroke-width="1"/><path d="M2.4 3.4 H10 M0.4 8.6 H12" stroke="#ececec" stroke-width="2.1"/></svg>
<svg class="a" style="left:1828.6px;top:565.3px;" width="12" height="12" viewBox="0 0 12 12"><path d="M11.4 -0.6 V12.6" stroke="#ececec" stroke-width="1"/><path d="M3.8 3.4 H9.4 M0 8.6 H9.4" stroke="#ececec" stroke-width="2.1"/></svg>
<svg class="a" style="left:1855.6px;top:565.3px;" width="12" height="12" viewBox="0 0 12 12"><path d="M-0.6 0.6 H12.6" stroke="#ececec" stroke-width="1"/><path d="M3.4 2.6 V12 M8.6 2.6 V8" stroke="#ececec" stroke-width="2.1"/></svg>
<svg class="a" style="left:1873px;top:565.3px;" width="12" height="12" viewBox="0 0 12 12"><path d="M-0.6 6.2 H12.6" stroke="#ececec" stroke-width="1"/><path d="M3.4 0.4 V12 M8.6 2.4 V10" stroke="#ececec" stroke-width="2.1"/></svg>
<svg class="a" style="left:1890.4px;top:565.3px;" width="12" height="12" viewBox="0 0 12 12"><path d="M-0.6 11.8 H12.6" stroke="#ececec" stroke-width="1"/><path d="M3.4 4 V9.8 M8.6 0.4 V9.8" stroke="#ececec" stroke-width="2.1"/></svg>
<svg class="a" style="left:1794px;top:592.8px;" width="12" height="12" viewBox="0 0 12 12"><path d="M0.8 -0.6 V12.6 M11.8 -0.6 V12.6" stroke="#ececec" stroke-width="1"/><path d="M6 1 V11" stroke="#ececec" stroke-width="2.6"/></svg>
<svg class="a" style="left:1811.2px;top:592.8px;" width="12" height="12" viewBox="0 0 12 12"><path d="M-0.4 0.8 H12.4 M-0.4 11.6 H12.4" stroke="#ececec" stroke-width="1"/><path d="M2 6.2 H10" stroke="#ececec" stroke-width="2.4"/></svg>
<svg class="a" style="left:1828.6px;top:592.8px;" width="12" height="12" viewBox="0 0 12 12"><path d="M0.4 3.4 V0.4 H3.4 M8.6 0.4 H11.6 V3.4 M11.6 8.6 V11.6 H8.6 M3.4 11.6 H0.4 V8.6" fill="none" stroke="#ececec" stroke-width="1"/><path d="M3 9.4 V7.4 M6 8 V4.8 M9 6 V2.8" stroke="#ececec" stroke-width="2"/></svg>
<div class="a" style="left:494.2px;top:626.4px;width:88.6px;height:21.6px;background:#444444;border-radius:4px 4px 0 0;"></div>
<div class="a" style="left:499.5px;top:629.7px;height:16px;line-height:16px;font-size:12px;color:#e4e4e4;white-space:nowrap;letter-spacing:-0.169px;">Scene Window</div>
<div class="a" style="left:584.2px;top:626.4px;width:100px;height:21.6px;background:#2a2a2a;border-radius:4px 4px 0 0;"></div>
<div class="a" style="left:589.5px;top:629.7px;height:16px;line-height:16px;font-size:12px;color:#e4e4e4;white-space:nowrap;letter-spacing:-0.070px;">JavaScript Editor</div>
<div class="a" style="left:685px;top:626.4px;width:111.5px;height:21.6px;background:#2a2a2a;border-radius:4px 4px 0 0;"></div>
<div class="a" style="left:690.3px;top:629.7px;height:16px;line-height:16px;font-size:12px;color:#e4e4e4;white-space:nowrap;letter-spacing:-0.159px;">Dependency Graph</div>
<div class="a" style="left:494px;top:648px;width:1420px;height:350px;background:#2a2a2a;"></div>
<div class="a" style="left:802.7px;top:651.7px;height:16px;line-height:16px;font-size:12px;color:#c0c0c0;white-space:nowrap;letter-spacing:-0.016px;">Composition 1</div>
<svg class="a" style="left:1186.8px;top:655.5px;" width="8" height="8" viewBox="0 0 8 8"><path d="M0.6 0.6 L7.4 7.4 M7.4 0.6 L0.6 7.4" stroke="#b4b4b4" stroke-width="0.9"/></svg>
<div class="a" style="left:1204px;top:650px;width:705px;height:20px;background:#444444;border-radius:5px 5px 0 0;"></div>
<div class="a" style="left:1507.5px;top:651.7px;height:16px;line-height:16px;font-size:12px;color:#e4e4e4;white-space:nowrap;letter-spacing:-0.016px;">Composition 2</div>
<svg class="a" style="left:1892px;top:655.5px;" width="8" height="8" viewBox="0 0 8 8"><path d="M0.6 0.6 L7.4 7.4 M7.4 0.6 L0.6 7.4" stroke="#b4b4b4" stroke-width="0.9"/></svg>
<div class="a" style="left:494px;top:670px;width:525px;height:42px;background:#444444;"></div>
<div class="a" style="left:496px;top:672.8px;width:314.6px;height:18.8px;background:#2a2a2a;border-radius:9.4px;"></div>
<svg class="a" style="left:500px;top:676.3px;" width="14" height="14" viewBox="0 0 14 14"><circle cx="5.3" cy="5.3" r="4.4" fill="none" stroke="#e0e0e0" stroke-width="1.05"/><path d="M9.2 9.2 L11.4 11.4" stroke="#e0e0e0" stroke-width="1.9" stroke-linecap="round"/></svg>
<div class="a" style="left:520px;top:675.2px;height:16px;line-height:16px;font-size:12px;color:#8c8c8c;white-space:nowrap;letter-spacing:-0.214px;">Enter a layer name</div>
<div class="a btn" style="left:813.4px;top:672px;width:19.2px;height:19.8px;"></div>
<svg class="a" style="left:818.3px;top:677px;" width="10" height="10" viewBox="0 0 10 10"><path d="M5 0 V10 M0 5 H10" stroke="#f0f0f0" stroke-width="1.6"/></svg>
<svg class="a" style="left:828.2px;top:687.4px;" width="3" height="3" viewBox="0 0 3 3"><path d="M3 0 V3 H0 Z" fill="#2ecc71"/></svg>
<div class="a btn" style="left:857px;top:672px;width:19.5px;height:19.8px;"></div>
<div class="a btn" style="left:879px;top:672px;width:19.5px;height:19.8px;"></div>
<div class="a btn" style="left:901px;top:672px;width:19.5px;height:19.8px;"></div>
<svg class="a" style="left:859.5px;top:674.5px;" width="15" height="15" viewBox="0 0 15 15"><path d="M3 10 Q1 13 5 12.6 M5.6 11 Q3.6 14 7.6 13.4" fill="none" stroke="#777" stroke-width="1"/><circle cx="6.8" cy="9" r="3.4" fill="#8a8a8a"/><circle cx="9.6" cy="6" r="4.3" fill="#d8d8d8"/></svg>
<svg class="a" style="left:883px;top:675.6px;" width="13" height="13" viewBox="0 0 13 13"><circle cx="1.8" cy="2" r="1.05" fill="#ddd"/><circle cx="7.2" cy="1.6" r="1.05" fill="#ddd"/><circle cx="1.7" cy="7.4" r="1.05" fill="#ddd"/><path d="M7.4 3.8 L8.4 6.9 L11.5 7.9 L8.4 8.9 L7.4 12 L6.4 8.9 L3.3 7.9 L6.4 6.9 Z" fill="#ddd"/><path d="M13 10.2 V13 H10.2 Z" fill="#2ecc71"/></svg>
<svg class="a" style="left:904.3px;top:675.2px;" width="13" height="13" viewBox="0 0 13 13"><path d="M0 2 H3 M7 2 H13 M0 6.5 H6 M10 6.5 H13 M0 11 H2 M6 11 H13" stroke="#dcdcdc" stroke-width="1.1"/><circle cx="5" cy="2" r="1.6" fill="none" stroke="#dcdcdc" stroke-width="1"/><circle cx="8" cy="6.5" r="1.6" fill="none" stroke="#dcdcdc" stroke-width="1"/><circle cx="4" cy="11" r="1.6" fill="none" stroke="#dcdcdc" stroke-width="1"/><path d="M13.5 10.7 V13.5 H10.7 Z" fill="#2ecc71"/></svg>
<div class="a" style="left:923px;top:672.8px;width:93.7px;height:18.8px;background:#2a2a2a;border-radius:3px;"></div>
<div class="a" style="left:928px;top:675.1px;height:16px;line-height:16px;font-size:12px;color:#555;white-space:nowrap;">F</div>
<div class="a" style="left:940.5px;top:675.1px;height:16px;line-height:16px;font-size:12px;color:#e4e4e4;white-space:nowrap;letter-spacing:-0.005px;">222</div>
<svg class="a" style="left:501px;top:697.4px;" width="9" height="11" viewBox="0 0 9 11"><path d="M2 5 V3.2 Q2 0.7 4.5 0.7 Q7 0.7 7 3.2 V5" fill="none" stroke="#e0e0e0" stroke-width="1.3"/><rect x="0.3" y="4.8" width="8.4" height="6" rx="0.8" fill="#e0e0e0"/><circle cx="4.5" cy="7.8" r="0.9" fill="#444"/></svg>
<svg class="a" style="left:517.2px;top:698.6px;" width="13" height="9.0" viewBox="0 0 13 9"><path d="M0.5 4.5 Q6.5 -2.4 12.5 4.5 Q6.5 11.4 0.5 4.5 Z" fill="none" stroke="#dcdcdc" stroke-width="1.05"/><circle cx="6.5" cy="4.5" r="2.1" fill="#dcdcdc"/></svg>
<svg class="a" style="left:536.7px;top:696.8px;" width="12.4" height="13" viewBox="0 0 12.4 13"><path d="M6.2 0.6 L11.8 3.4 V9.6 L6.2 12.4 L0.6 9.6 V3.4 Z M0.8 3.5 L6.2 6.3 L11.6 3.5 M6.2 6.3 V12.2" fill="none" stroke="#dcdcdc" stroke-width="1"/></svg>
<svg class="a" style="left:555.6px;top:697.4px;" width="14.3" height="12.100000000000001" viewBox="0 0 13 11"><path d="M0.4 3.6 H2.8 L6 0.6 V10.4 L2.8 7.4 H0.4 Z" fill="#dcdcdc"/><path d="M7.6 3.2 Q9 5.5 7.6 7.8 M9.4 1.6 Q11.8 5.5 9.4 9.4" fill="none" stroke="#dcdcdc" stroke-width="1.35"/></svg>
<svg class="a" style="left:574.8px;top:697px;" width="12" height="12" viewBox="0 0 12 12"><path d="M8.2 1 Q9.6 -0.2 10.9 1.1 Q12.2 2.4 11 3.8 L9.4 5.4 L6.6 2.6 Z" fill="#d8d8d8"/><path d="M5.6 2.2 L9.8 6.4" stroke="#d8d8d8" stroke-width="1.6"/><path d="M6.8 4 L1.4 9.4 L0.6 11.4 L2.6 10.6 L8 5.2" fill="none" stroke="#d8d8d8" stroke-width="1"/></svg>
<svg class="a" style="left:593.2px;top:698.5px;" width="14" height="9" viewBox="0 0 14 9"><path d="M4 0.4 H13 Q13.6 0.4 13.6 1 V8 Q13.6 8.6 13 8.6 H4 L0.3 4.5 Z" fill="#e8e8e8"/><circle cx="4.4" cy="4.5" r="1.45" fill="#3a3a3a"/></svg>
<div class="a" style="left:648.9px;top:695.8px;height:16px;line-height:16px;font-size:12px;color:#e4e4e4;white-space:nowrap;letter-spacing:-0.254px;">Name</div>
<div class="a" style="left:496px;top:712.9px;width:507.2px;height:20px;background:#575342;border-radius:3px;"></div>
<div class="a" style="left:496px;top:734.7px;width:507.2px;height:21px;background:#333333;"></div>
<div class="a" style="left:496.2px;top:714.3000000000001px;width:17.6px;height:17.8px;background:#222222;border-radius:2px;"></div>
<div class="a" style="left:515.3px;top:714.3000000000001px;width:17.6px;height:17.8px;background:#222222;border-radius:2px;"></div>
<div class="a" style="left:534.4px;top:714.3000000000001px;width:17.6px;height:17.8px;background:#222222;border-radius:2px;"></div>
<svg class="a" style="left:517.6px;top:718.7px;" width="13" height="9.0" viewBox="0 0 13 9"><path d="M0.5 4.5 Q6.5 -2.4 12.5 4.5 Q6.5 11.4 0.5 4.5 Z" fill="none" stroke="#dcdcdc" stroke-width="1.05"/><circle cx="6.5" cy="4.5" r="2.1" fill="#dcdcdc"/></svg>
<svg class="a" style="left:593.2px;top:718.5px;" width="14" height="9" viewBox="0 0 14 9"><path d="M4 0.4 H13 Q13.6 0.4 13.6 1 V8 Q13.6 8.6 13 8.6 H4 L0.3 4.5 Z" fill="#e8e8e8"/><circle cx="4.4" cy="4.5" r="1.45" fill="#3a3a3a"/></svg>
<svg class="a" style="left:990.8px;top:717.9000000000001px;" width="9.4" height="9.4" viewBox="0 0 9.4 9.4"><circle cx="4.7" cy="4.7" r="3.9" fill="none" stroke="#777" stroke-width="1"/></svg>
<div class="a" style="left:496.2px;top:736.3000000000001px;width:17.6px;height:17.8px;background:#222222;border-radius:2px;"></div>
<div class="a" style="left:515.3px;top:736.3000000000001px;width:17.6px;height:17.8px;background:#222222;border-radius:2px;"></div>
<div class="a" style="left:534.4px;top:736.3000000000001px;width:17.6px;height:17.8px;background:#222222;border-radius:2px;"></div>
<svg class="a" style="left:517.6px;top:740.7px;" width="13" height="9.0" viewBox="0 0 13 9"><path d="M0.5 4.5 Q6.5 -2.4 12.5 4.5 Q6.5 11.4 0.5 4.5 Z" fill="none" stroke="#dcdcdc" stroke-width="1.05"/><circle cx="6.5" cy="4.5" r="2.1" fill="#dcdcdc"/></svg>
<svg class="a" style="left:593.2px;top:740.5px;" width="14" height="9" viewBox="0 0 14 9"><path d="M4 0.4 H13 Q13.6 0.4 13.6 1 V8 Q13.6 8.6 13 8.6 H4 L0.3 4.5 Z" fill="#e8e8e8"/><circle cx="4.4" cy="4.5" r="1.45" fill="#3a3a3a"/></svg>
<svg class="a" style="left:990.8px;top:739.9000000000001px;" width="9.4" height="9.4" viewBox="0 0 9.4 9.4"><circle cx="4.7" cy="4.7" r="3.9" fill="none" stroke="#777" stroke-width="1"/></svg>
<div class="a" style="left:572.4px;top:715.5px;width:16.6px;height:15.8px;background:#ffe57f;border-radius:2.5px;"></div>
<div class="a" style="left:572.4px;top:737.5px;width:16.6px;height:15.8px;background:#cacaca;border-radius:2.5px;"></div>
<div class="a" style="left:613.4px;top:711.2px;width:303.8px;height:23.7px;background:#575342;border:3.2px solid #b6e31c;"></div>
<div class="a" style="left:648px;top:716.4px;width:13.6px;height:14px;background:#cfcfcf;border-radius:1.5px;border:1px solid #f2e25c;box-shadow:inset 0 0 0 1.4px #575342;"></div>
<div class="a" style="left:667.2px;top:715.8px;height:16px;line-height:16px;font-size:12px;color:#e4e4e4;white-space:nowrap;letter-spacing:-0.284px;">Background Shape</div>
<div class="a" style="left:611.4px;top:737.6px;width:13.4px;height:15.6px;background:#2f2f2f;border-radius:2px;"></div>
<div class="a" style="left:625.8px;top:737.6px;width:14.6px;height:15.6px;background:#2f2f2f;border-radius:2px;"></div>
<svg class="a" style="left:616px;top:741.2px;" width="6" height="8" viewBox="0 0 6 8"><path d="M0.8 0.6 L4.8 4 L0.8 7.4" fill="none" stroke="#8a8a8a" stroke-width="1"/></svg>
<div class="a" style="left:631px;top:742.3px;width:6px;height:6px;background:#f0f0f0;border-radius:3px;"></div>
<svg class="a" style="left:648px;top:739.3px;" width="14" height="11.4" viewBox="0 0 14 11.4"><path d="M0.3 1 Q0.3 0.3 1 0.3 H4.6 L5.8 1.9 H13 Q13.7 1.9 13.7 2.6 V10.4 Q13.7 11.1 13 11.1 H1 Q0.3 11.1 0.3 10.4 Z" fill="#d4d4d4"/></svg>
<div class="a" style="left:667.2px;top:737.8px;height:16px;line-height:16px;font-size:12px;color:#e4e4e4;white-space:nowrap;letter-spacing:-0.169px;">Graph</div>
<div class="a" style="left:1007.4px;top:714px;width:9.2px;height:246px;background:#4a4a4a;border-radius:4.6px;"></div>
<div class="a" style="left:495px;top:964px;width:509px;height:10.2px;background:#4a4a4a;border-radius:5.1px;"></div>
<div class="a" style="left:1006px;top:962px;width:12px;height:14px;background:#333;"></div>
<div class="a" style="left:494px;top:976px;width:525px;height:21.8px;background:#444444;"></div>
<div class="a" style="left:497px;top:977.4px;width:19.6px;height:18.8px;background:#3a3a3a;border-radius:4px;border:1px solid #222;"></div>
<svg class="a" style="left:499.8px;top:982.5px;" width="14" height="9" viewBox="0 0 14 9"><path d="M4 0.4 H13 Q13.6 0.4 13.6 1 V8 Q13.6 8.6 13 8.6 H4 L0.3 4.5 Z" fill="#e8e8e8"/><circle cx="4.4" cy="4.5" r="1.45" fill="#3a3a3a"/></svg>
<div class="a" style="left:520.4px;top:980.3px;height:16px;line-height:16px;font-size:12px;color:#e4e4e4;white-space:nowrap;letter-spacing:-0.219px;">1 selected</div>
<div class="a btn" style="left:810.6px;top:977.4px;width:18.8px;height:18.8px;"></div>
<svg class="a" style="left:814.5px;top:981.2px;" width="11" height="11" viewBox="0 0 11 11"><rect x="0.6" y="0.6" width="9.8" height="9.8" rx="1" fill="none" stroke="#e4e4e4" stroke-width="1.1"/><circle cx="5.5" cy="5.5" r="1.6" fill="#e4e4e4"/></svg>
<div class="a" style="left:833px;top:977.4px;width:183px;height:18.8px;background:#5a5a5a;border-radius:4px;"></div>
<div class="a" style="left:834px;top:978.2px;width:85.7px;height:17.2px;background:#2a2a2a;border-radius:3px;"></div>
<svg class="a" style="left:839.5px;top:982.2px;" width="12" height="10" viewBox="0 0 12 10"><path d="M1.5 1 H11 M0 5 H8 M2.5 9 H10.5" stroke="#2ecc71" stroke-width="1.7"/></svg>
<div class="a" style="left:856px;top:980.3px;height:16px;line-height:16px;font-size:12px;color:#e4e4e4;white-space:nowrap;letter-spacing:0.009px;">Time Editor</div>
<svg class="a" style="left:928px;top:981.5px;" width="13" height="11" viewBox="0 0 13 11"><path d="M1.6 0 V9.6 H13" fill="none" stroke="#d0d0d0" stroke-width="1"/><path d="M2 9 L11.5 1.5" stroke="#d0d0d0" stroke-width="1"/><path d="M0 2 H3 M10.5 11 V8" stroke="#777" stroke-width="0.8" stroke-dasharray="1 1"/></svg>
<div class="a" style="left:945px;top:980.3px;height:16px;line-height:16px;font-size:12px;color:#e4e4e4;white-space:nowrap;letter-spacing:-0.043px;">Graph Editor</div>
<div class="a" style="left:1019px;top:670px;width:4px;height:328px;background:#2a2a2a;"></div>
<div class="a" style="left:1023px;top:670px;width:4px;height:328px;background:#1f1f1f;"></div>
<div class="a" style="left:1021px;top:829px;width:1.6px;height:1.6px;background:#8a8a8a;"></div>
<div class="a" style="left:1021px;top:833px;width:1.6px;height:1.6px;background:#8a8a8a;"></div>
<div class="a" style="left:1021px;top:837px;width:1.6px;height:1.6px;background:#8a8a8a;"></div>
<div class="a" style="left:1021px;top:841px;width:1.6px;height:1.6px;background:#8a8a8a;"></div>
<div class="a" style="left:1027px;top:670px;width:887px;height:24.2px;background:#242424;"></div>
<svg class="a" style="left:1027px;top:670px;shape-rendering:crispEdges;" width="886" height="24.2" viewBox="0 0 886 24.2"><rect x="6" y="16.4" width="1" height="7.8" fill="#c8c8c8"/><rect x="17" y="20" width="1" height="4.2" fill="#a4a4a4"/><rect x="27" y="20" width="1" height="4.2" fill="#a4a4a4"/><rect x="38" y="20" width="1" height="4.2" fill="#a4a4a4"/><rect x="48" y="20" width="1" height="4.2" fill="#a4a4a4"/><rect x="59" y="16.4" width="1" height="7.8" fill="#c8c8c8"/><rect x="69" y="20" width="1" height="4.2" fill="#a4a4a4"/><rect x="79" y="20" width="1" height="4.2" fill="#a4a4a4"/><rect x="90" y="20" width="1" height="4.2" fill="#a4a4a4"/><rect x="100" y="20" width="1" height="4.2" fill="#a4a4a4"/><rect x="111" y="16.4" width="1" height="7.8" fill="#c8c8c8"/><rect x="121" y="20" width="1" height="4.2" fill="#a4a4a4"/><rect x="132" y="20" width="1" height="4.2" fill="#a4a4a4"/><rect x="142" y="20" width="1" height="4.2" fill="#a4a4a4"/><rect x="153" y="20" width="1" height="4.2" fill="#a4a4a4"/><rect x="163" y="16.4" width="1" height="7.8" fill="#c8c8c8"/><rect x="174" y="20" width="1" height="4.2" fill="#a4a4a4"/><rect x="184" y="20" width="1" height="4.2" fill="#a4a4a4"/><rect x="195" y="20" width="1" height="4.2" fill="#a4a4a4"/><rect x="205" y="20" width="1" height="4.2" fill="#a4a4a4"/><rect x="215" y="16.4" width="1" height="7.8" fill="#c8c8c8"/><rect x="226" y="20" width="1" height="4.2" fill="#a4a4a4"/><rect x="236" y="20" width="1" height="4.2" fill="#a4a4a4"/><rect x="247" y="20" width="1" height="4.2" fill="#a4a4a4"/><rect x="257" y="20" width="1" height="4.2" fill="#a4a4a4"/><rect x="268" y="16.4" width="1" height="7.8" fill="#c8c8c8"/><rect x="278" y="20" width="1" height="4.2" fill="#a4a4a4"/><rect x="289" y="20" width="1" height="4.2" fill="#a4a4a4"/><rect x="299" y="20" width="1" height="4.2" fill="#a4a4a4"/><rect x="310" y="20" width="1" height="4.2" fill="#a4a4a4"/><rect x="320" y="16.4" width="1" height="7.8" fill="#c8c8c8"/><rect x="331" y="20" width="1" height="4.2" fill="#a4a4a4"/><rect x="341" y="20" width="1" height="4.2" fill="#a4a4a4"/><rect x="351" y="20" width="1" height="4.2" fill="#a4a4a4"/><rect x="362" y="20" width="1" height="4.2" fill="#a4a4a4"/><rect x="372" y="16.4" width="1" height="7.8" fill="#c8c8c8"/><rect x="383" y="20" width="1" height="4.2" fill="#a4a4a4"/><rect x="393" y="20" width="1" height="4.2" fill="#a4a4a4"/><rect x="404" y="20" width="1" height="4.2" fill="#a4a4a4"/><rect x="414" y="20" width="1" height="4.2" fill="#a4a4a4"/><rect x="425" y="16.4" width="1" height="7.8" fill="#c8c8c8"/><rect x="435" y="20" width="1" height="4.2" fill="#a4a4a4"/><rect x="446" y="20" width="1" height="4.2" fill="#a4a4a4"/><rect x="456" y="20" width="1" height="4.2" fill="#a4a4a4"/><rect x="467" y="20" width="1" height="4.2" fill="#a4a4a4"/><rect x="477" y="16.4" width="1" height="7.8" fill="#c8c8c8"/><rect x="487" y="20" width="1" height="4.2" fill="#a4a4a4"/><rect x="498" y="20" width="1" height="4.2" fill="#a4a4a4"/><rect x="508" y="20" width="1" height="4.2" fill="#a4a4a4"/><rect x="519" y="20" width="1" height="4.2" fill="#a4a4a4"/><rect x="529" y="16.4" width="1" height="7.8" fill="#c8c8c8"/><rect x="540" y="20" width="1" height="4.2" fill="#a4a4a4"/><rect x="550" y="20" width="1" height="4.2" fill="#a4a4a4"/><rect x="561" y="20" width="1" height="4.2" fill="#a4a4a4"/><rect x="571" y="20" width="1" height="4.2" fill="#a4a4a4"/><rect x="582" y="16.4" width="1" height="7.8" fill="#c8c8c8"/><rect x="592" y="20" width="1" height="4.2" fill="#a4a4a4"/><rect x="603" y="20" width="1" height="4.2" fill="#a4a4a4"/><rect x="613" y="20" width="1" height="4.2" fill="#a4a4a4"/><rect x="623" y="20" width="1" height="4.2" fill="#a4a4a4"/><rect x="634" y="16.4" width="1" height="7.8" fill="#c8c8c8"/><rect x="644" y="20" width="1" height="4.2" fill="#a4a4a4"/><rect x="655" y="20" width="1" height="4.2" fill="#a4a4a4"/><rect x="665" y="20" width="1" height="4.2" fill="#a4a4a4"/><rect x="676" y="20" width="1" height="4.2" fill="#a4a4a4"/><rect x="686" y="16.4" width="1" height="7.8" fill="#c8c8c8"/><rect x="697" y="20" width="1" height="4.2" fill="#a4a4a4"/><rect x="707" y="20" width="1" height="4.2" fill="#a4a4a4"/><rect x="718" y="20" width="1" height="4.2" fill="#a4a4a4"/><rect x="728" y="20" width="1" height="4.2" fill="#a4a4a4"/><rect x="739" y="16.4" width="1" height="7.8" fill="#c8c8c8"/><rect x="749" y="20" width="1" height="4.2" fill="#a4a4a4"/><rect x="760" y="20" width="1" height="4.2" fill="#a4a4a4"/><rect x="770" y="20" width="1" height="4.2" fill="#a4a4a4"/><rect x="780" y="20" width="1" height="4.2" fill="#a4a4a4"/><rect x="791" y="16.4" width="1" height="7.8" fill="#c8c8c8"/><rect x="801" y="20" width="1" height="4.2" fill="#a4a4a4"/><rect x="812" y="20" width="1" height="4.2" fill="#a4a4a4"/><rect x="822" y="20" width="1" height="4.2" fill="#a4a4a4"/><rect x="833" y="20" width="1" height="4.2" fill="#a4a4a4"/><rect x="843" y="16.4" width="1" height="7.8" fill="#c8c8c8"/><rect x="854" y="20" width="1" height="4.2" fill="#a4a4a4"/><rect x="864" y="20" width="1" height="4.2" fill="#a4a4a4"/><rect x="875" y="20" width="1" height="4.2" fill="#a4a4a4"/><rect x="885" y="20" width="1" height="4.2" fill="#a4a4a4"/></svg>
<div class="a" style="left:1032.8px;top:672.0px;height:14px;line-height:14px;font-size:12px;color:#e4e4e4;white-space:nowrap;transform:translateX(-50%);letter-spacing:0px;-webkit-text-stroke:0.25px #e4e4e4;">0</div>
<div class="a" style="left:1085.1125px;top:672.0px;height:14px;line-height:14px;font-size:12px;color:#e4e4e4;white-space:nowrap;transform:translateX(-50%);letter-spacing:0px;-webkit-text-stroke:0.25px #e4e4e4;">15</div>
<div class="a" style="left:1137.425px;top:672.0px;height:14px;line-height:14px;font-size:12px;color:#e4e4e4;white-space:nowrap;transform:translateX(-50%);letter-spacing:0px;-webkit-text-stroke:0.25px #e4e4e4;">30</div>
<div class="a" style="left:1189.7375px;top:672.0px;height:14px;line-height:14px;font-size:12px;color:#e4e4e4;white-space:nowrap;transform:translateX(-50%);letter-spacing:0px;-webkit-text-stroke:0.25px #e4e4e4;">45</div>
<div class="a" style="left:1242.05px;top:672.0px;height:14px;line-height:14px;font-size:12px;color:#e4e4e4;white-space:nowrap;transform:translateX(-50%);letter-spacing:0px;-webkit-text-stroke:0.25px #e4e4e4;">60</div>
<div class="a" style="left:1294.3625px;top:672.0px;height:14px;line-height:14px;font-size:12px;color:#e4e4e4;white-space:nowrap;transform:translateX(-50%);letter-spacing:0px;-webkit-text-stroke:0.25px #e4e4e4;">75</div>
<div class="a" style="left:1346.675px;top:672.0px;height:14px;line-height:14px;font-size:12px;color:#e4e4e4;white-space:nowrap;transform:translateX(-50%);letter-spacing:0px;-webkit-text-stroke:0.25px #e4e4e4;">90</div>
<div class="a" style="left:1398.9875px;top:672.0px;height:14px;line-height:14px;font-size:12px;color:#e4e4e4;white-space:nowrap;transform:translateX(-50%);letter-spacing:0px;-webkit-text-stroke:0.25px #e4e4e4;">105</div>
<div class="a" style="left:1451.3px;top:672.0px;height:14px;line-height:14px;font-size:12px;color:#e4e4e4;white-space:nowrap;transform:translateX(-50%);letter-spacing:0px;-webkit-text-stroke:0.25px #e4e4e4;">120</div>
<div class="a" style="left:1503.6125px;top:672.0px;height:14px;line-height:14px;font-size:12px;color:#e4e4e4;white-space:nowrap;transform:translateX(-50%);letter-spacing:0px;-webkit-text-stroke:0.25px #e4e4e4;">135</div>
<div class="a" style="left:1555.925px;top:672.0px;height:14px;line-height:14px;font-size:12px;color:#e4e4e4;white-space:nowrap;transform:translateX(-50%);letter-spacing:0px;-webkit-text-stroke:0.25px #e4e4e4;">150</div>
<div class="a" style="left:1608.2375px;top:672.0px;height:14px;line-height:14px;font-size:12px;color:#e4e4e4;white-space:nowrap;transform:translateX(-50%);letter-spacing:0px;-webkit-text-stroke:0.25px #e4e4e4;">165</div>
<div class="a" style="left:1660.55px;top:672.0px;height:14px;line-height:14px;font-size:12px;color:#e4e4e4;white-space:nowrap;transform:translateX(-50%);letter-spacing:0px;-webkit-text-stroke:0.25px #e4e4e4;">180</div>
<div class="a" style="left:1712.8625px;top:672.0px;height:14px;line-height:14px;font-size:12px;color:#e4e4e4;white-space:nowrap;transform:translateX(-50%);letter-spacing:0px;-webkit-text-stroke:0.25px #e4e4e4;">195</div>
<div class="a" style="left:1765.175px;top:672.0px;height:14px;line-height:14px;font-size:12px;color:#e4e4e4;white-space:nowrap;transform:translateX(-50%);letter-spacing:0px;-webkit-text-stroke:0.25px #e4e4e4;">210</div>
<div class="a" style="left:1817.4875px;top:672.0px;height:14px;line-height:14px;font-size:12px;color:#e4e4e4;white-space:nowrap;transform:translateX(-50%);letter-spacing:0px;-webkit-text-stroke:0.25px #e4e4e4;">225</div>
<div class="a" style="left:1869.8px;top:672.0px;height:14px;line-height:14px;font-size:12px;color:#e4e4e4;white-space:nowrap;transform:translateX(-50%);letter-spacing:0px;-webkit-text-stroke:0.25px #e4e4e4;">240</div>
<div class="a" style="left:1034px;top:694.2px;width:871px;height:16px;background:#444444;"></div>
<div class="a" style="left:1029px;top:693px;width:4.8px;height:18px;background:#7fd3b8;border-radius:1.2px;"></div>
<div class="a" style="left:1904.9px;top:693px;width:4.8px;height:18px;background:#7fd3b8;border-radius:1.2px;"></div>
<div class="a" style="left:1027px;top:711px;width:7px;height:253px;background:#1c1c1c;"></div>
<div class="a" style="left:1905px;top:711px;width:8px;height:253px;background:#202020;"></div>
<div class="a" style="left:1034px;top:713.9px;width:871px;height:18px;background:#fdf18c;border-radius:3px;background-image:radial-gradient(circle at 1px 0.9px,#d4b838 0.5px,rgba(212,184,56,0) 0.95px),radial-gradient(circle at 3.95px 2.62px,#d4b838 0.5px,rgba(212,184,56,0) 0.95px);background-size:5.9px 3.44px;border:1.3px solid #fffef2;"></div>
<div class="a" style="left:1043px;top:715.3px;height:16px;line-height:16px;font-size:12px;color:#161616;white-space:nowrap;letter-spacing:-0.347px;">Background Shape</div>
<div class="a" style="left:1034px;top:736.4px;width:871px;height:17.8px;background:#c4c4c4;border-radius:2.5px;"></div>
<div class="a" style="left:1043px;top:737.8px;height:16px;line-height:16px;font-size:12px;color:#1c1c1c;white-space:nowrap;letter-spacing:-0.269px;">Graph</div>
<div class="a" style="left:1119px;top:743.3px;width:3.6px;height:3.6px;background:#7a7a7a;border-radius:1.8px;"></div>
<div class="a" style="left:1032.2px;top:743.3px;width:3.6px;height:3.6px;background:#7a7a7a;border-radius:1.8px;"></div>
<div class="a" style="left:1806.7px;top:693px;width:1.1px;height:269px;background:#7fd3b8;"></div>
<svg class="a" style="left:1799.8px;top:683.5px;" width="15.2" height="9.6" viewBox="0 0 15.2 9.6"><path d="M0 0 H15.2 L7.6 9.4 Z" fill="#7fd3b8"/></svg>
<div class="a" style="left:1027px;top:964px;width:885.5px;height:10px;background:#4a4a4a;border-radius:5px;"></div>
<div class="a" style="left:1027px;top:975.6px;width:887px;height:22px;background:#444444;"></div>
<div class="a btn" style="left:1029.4px;top:977.4px;width:17px;height:18.8px;"></div>
<svg class="a" style="left:1031.5px;top:980.8px;" width="13" height="12" viewBox="0 0 13 12"><path d="M0 1 H13 M0 5 H13" stroke="#e4e4e4" stroke-width="1.6"/><path d="M0 9.4 H4 M6 9.4 H8.6" stroke="#e4e4e4" stroke-width="1.6"/><path d="M13.4 9 V12 H10.4 Z" fill="#2ecc71"/></svg>
<div class="a" style="left:1050px;top:978.7px;width:150px;height:16.4px;background:#2b2b2b;border-radius:3px;"></div>
<div class="a" style="left:1052.5px;top:980.3px;height:16px;line-height:16px;font-size:12px;color:#e4e4e4;white-space:nowrap;letter-spacing:-0.115px;">Default Keyframe Layer</div>
<div class="a" style="left:1205.8px;top:978.7px;width:70.2px;height:16.4px;background:#2b2b2b;border-radius:3px;"></div>
<div class="a" style="left:1210.5px;top:980.3px;height:16px;line-height:16px;font-size:12px;color:#555;white-space:nowrap;">F</div>
<div class="a" style="left:1224px;top:979.8px;height:16px;line-height:16px;font-size:12px;color:#e4e4e4;white-space:nowrap;">-</div>
<div class="a" style="left:1282.5px;top:980.3px;height:16px;line-height:16px;font-size:12px;color:#e4e4e4;white-space:nowrap;letter-spacing:-0.119px;">Align:</div>
<div class="a btn" style="left:1318.8px;top:977.8px;width:52px;height:18.4px;"></div>
<div class="a" style="left:1336.2px;top:978.8px;width:1px;height:16.4px;background:#1c1c1c;"></div>
<div class="a" style="left:1353.6px;top:978.8px;width:1px;height:16.4px;background:#1c1c1c;"></div>
<svg class="a" style="left:1321.5px;top:981px;" width="12" height="12" viewBox="0 0 12 12"><path d="M1 0 V12" stroke="#ececec" stroke-width="1.1"/><path d="M3 3.4 H5" stroke="#ececec" stroke-width="1.6"/><rect x="5.6" y="2.6" width="1.8" height="1.8" fill="#6fcfb0"/><path d="M3 8.8 H10.5" stroke="#ececec" stroke-width="1.6"/></svg>
<svg class="a" style="left:1339px;top:981px;" width="12" height="12" viewBox="0 0 12 12"><path d="M6 0 V12" stroke="#ececec" stroke-width="1.1"/><path d="M2.4 3.4 H4.4 M7.6 3.4 H9.6 M1 8.8 H4.6 M7.4 8.8 H11" stroke="#ececec" stroke-width="1.4"/><rect x="5.1" y="2.5" width="1.8" height="1.8" fill="#6fcfb0"/><rect x="5.1" y="7.9" width="1.8" height="1.8" fill="#6fcfb0"/></svg>
<svg class="a" style="left:1356.5px;top:981px;" width="12" height="12" viewBox="0 0 12 12"><path d="M11 0 V12" stroke="#ececec" stroke-width="1.1"/><path d="M7 3.4 H9" stroke="#ececec" stroke-width="1.6"/><rect x="4.6" y="2.6" width="1.8" height="1.8" fill="#6fcfb0"/><path d="M1.5 8.8 H9" stroke="#ececec" stroke-width="1.6"/></svg>
<div class="a btn" style="left:1375.8px;top:977.8px;width:16.4px;height:18.4px;"></div>
<svg class="a" style="left:1378px;top:981px;" width="12" height="12" viewBox="0 0 12 12"><path d="M0.6 3.4 V0.6 H3.4 M8.6 0.6 H11.4 V3.4 M11.4 8.6 V11.4 H8.6 M3.4 11.4 H0.6 V8.6" fill="none" stroke="#cfcfcf" stroke-width="1.1"/><path d="M4.6 0.6 H7.4 M4.6 11.4 H7.4 M0.6 4.6 V7.4 M11.4 4.6 V7.4" stroke="#8a8a8a" stroke-width="1"/><rect x="5" y="5" width="2" height="2" fill="#e4e4e4"/></svg>
<div class="a btn" style="left:1396px;top:977.8px;width:31px;height:18.4px;"></div>
<div class="a" style="left:1415.4px;top:978.8px;width:1px;height:16.4px;background:#1c1c1c;"></div>
<svg class="a" style="left:1398.6px;top:979.6px;" width="14" height="14" viewBox="0 0 14 14"><g transform="translate(7.2 7) rotate(-40)"><path d="M-3.5 4.8 V-0.4 A3.5 3.5 0 0 1 3.5 -0.4 V4.8" fill="none" stroke="#e2e2e2" stroke-width="2.4"/><path d="M-3.5 4.8 V3.2 M3.5 4.8 V3.2" stroke="#9c9c9c" stroke-width="2.4"/></g></svg>
<svg class="a" style="left:1418.6px;top:983px;" width="7" height="8" viewBox="0 0 7 8"><path d="M0.6 0.7 L5.6 3.9 L0.6 7.1 Z" fill="none" stroke="#7e7e7e" stroke-width="0.9"/></svg>
<div class="a btn" style="left:1431.3px;top:977.8px;width:31px;height:18.4px;"></div>
<div class="a" style="left:1449.5px;top:978.8px;width:1px;height:16.4px;background:#1c1c1c;"></div>
<svg class="a" style="left:1434px;top:981px;" width="14" height="12" viewBox="0 0 14 12"><path d="M0 6 H2.4 M3.6 1.2 V10.8 M5.8 3.8 V8.2 M8 3.2 V8.8 M9.6 6 H13.4" stroke="#e0e0e0" stroke-width="1" fill="none"/></svg>
<svg class="a" style="left:1452.8px;top:983px;" width="7" height="8" viewBox="0 0 7 8"><path d="M0.6 0.7 L5.6 3.9 L0.6 7.1 Z" fill="none" stroke="#7e7e7e" stroke-width="0.9"/></svg>
<svg class="a" style="left:1743.6px;top:980.5px;" width="15" height="15" viewBox="0 0 15 15"><circle cx="6.2" cy="6.2" r="5.7" fill="none" stroke="#dcdcdc" stroke-width="1"/><path d="M3.6 6.2 H8.8" stroke="#dcdcdc" stroke-width="1"/><path d="M10.8 10.8 L12 12" stroke="#dcdcdc" stroke-width="2" stroke-linecap="round"/></svg>
<div class="a" style="left:1767px;top:985.8px;width:114.6px;height:3px;background:#555;border-radius:1.5px;"></div>
<div class="a" style="left:1761.8px;top:982px;width:10.4px;height:10.4px;background:radial-gradient(circle,#4f9f88 0,#4f9f88 1.6px,#72d2b4 2.4px);border-radius:5.2px;"></div>
<svg class="a" style="left:1887.6px;top:980.5px;" width="15" height="15" viewBox="0 0 15 15"><circle cx="6.2" cy="6.2" r="5.7" fill="none" stroke="#dcdcdc" stroke-width="1"/><path d="M3.6 6.2 H8.8 M6.2 3.6 V8.8" stroke="#dcdcdc" stroke-width="1"/><path d="M10.8 10.8 L12 12" stroke="#dcdcdc" stroke-width="2" stroke-linecap="round"/></svg>
<div class="a" style="left:494px;top:998px;width:1420px;height:6px;background:#151515;"></div>
<div class="a" style="left:494px;top:1004px;width:1420px;height:22px;background:#3a3a3a;"></div>
<div class="a" style="left:498.2px;top:1010.2px;width:2px;height:2px;background:#8a8a8a;"></div>
<div class="a" style="left:498.2px;top:1014.2px;width:2px;height:2px;background:#8a8a8a;"></div>
<div class="a" style="left:498.2px;top:1018.2px;width:2px;height:2px;background:#8a8a8a;"></div>
<div class="a btn" style="left:507.4px;top:1006px;width:17px;height:17.6px;"></div>
<svg class="a" style="left:509.4px;top:1008.4px;" width="13.4" height="12.4" viewBox="0 0 13.4 12.4"><path d="M0.4 0.4 H12.8 V8.8 H10.4 V11.8 L7.4 8.8 H0.4 Z" fill="#ececec"/><path d="M1.8 2.6 H3 M4.2 2.6 H11.2 M1.8 4.6 H3 M4.2 4.6 H11.2 M1.8 6.6 H3 M4.2 6.6 H11.2" stroke="#333" stroke-width="1"/></svg>
<svg class="a" style="left:521.3px;top:1020px;" width="3" height="3" viewBox="0 0 3 3"><path d="M3 0 V3 H0 Z" fill="#2ecc71"/></svg>
<div class="a" style="left:528px;top:1008.3px;width:18.2px;height:13.8px;background:#2ecc71;border-radius:2px;"></div>
<div class="a" style="left:534.3px;top:1007.3px;height:16px;line-height:16px;font-size:11px;color:#16301f;white-space:nowrap;">7</div>
<div class="a" style="left:554px;top:1012.4px;width:6px;height:6px;background:#2ecc71;border-radius:3px;"></div>
<div class="a" style="left:565.4px;top:1008.2px;height:16px;line-height:16px;font-size:12px;color:#e4e4e4;white-space:nowrap;letter-spacing:-0.108px;">Background (Ctrl+Y)</div>
<div class="a" style="left:1349.3px;top:1007.0px;height:16px;line-height:16px;font-size:12px;color:#e8e8e8;white-space:nowrap;letter-spacing:-0.741px;font-style:italic;">Click to see next message</div>
<div class="a" style="left:1477.2px;top:1006px;width:79.5px;height:17.8px;background:#d3bc6b;border-radius:2px;"></div>
<div class="a" style="left:1482.6000000000001px;top:1007.6px;height:16px;line-height:16px;font-size:12px;color:#1c1c38;white-space:nowrap;letter-spacing:-0.386px;">Feedback</div>
<div class="a" style="left:1560px;top:1006px;width:108.8px;height:17.8px;background:#35cf79;border-radius:2px;"></div>
<div class="a" style="left:1565.7px;top:1007.6px;height:16px;line-height:16px;font-size:12px;color:#1c1c38;white-space:nowrap;letter-spacing:-0.204px;">Upgrade to Pro</div>
<div class="a" style="left:1672px;top:1006px;width:129.7px;height:17.8px;background:#ba95f8;border-radius:2px;"></div>
<div class="a" style="left:1676.8px;top:1007.6px;height:16px;line-height:16px;font-size:12px;color:#1c1c38;white-space:nowrap;letter-spacing:-0.132px;">New Beta Available</div>
<div class="a" style="left:1805px;top:1006px;width:105.9px;height:17.8px;background:#3eaef4;border-radius:2px;"></div>
<div class="a" style="left:1810.3px;top:1007.6px;height:16px;line-height:16px;font-size:12px;color:#1c1c38;white-space:nowrap;letter-spacing:-0.270px;">Tips and Tricks</div>
<svg class="a" style="left:1538.7px;top:1010px;" width="12" height="12" viewBox="0 0 12 12"><path d="M1 0.3 H6.6 L9 2.8 V11.6 H1 Z" fill="#f4f4f4"/><path d="M6.6 0.3 V2.8 H9" fill="#d0d4dc"/><path d="M2.2 3.6 H6.4 M2.2 5.2 H7 M2.2 6.8 H5.4" stroke="#c4c8d0" stroke-width="0.9"/><path d="M3.6 10.8 L4.4 8.4 L9.4 3.8 L11 5.4 L6 10 Z" fill="#f5923a"/><path d="M9.4 3.8 L10.2 3 Q10.8 2.6 11.4 3.2 Q12 3.8 11.6 4.4 L11 5.4 Z" fill="#ee5a7a"/><path d="M3.6 10.8 L4.1 9.4 L5 10.3 Z" fill="#5a4030"/></svg>
<svg class="a" style="left:1649.3px;top:1010px;" width="13.4" height="12" viewBox="0 0 13.4 12"><path d="M1 6 Q0.2 3.4 1.6 3 Q2.4 2.8 2.8 4 Q2.8 2 3.8 2 Q4.8 2 4.8 3.6 Q5.4 2.6 6 3.4 Q6.4 4 6.2 6 Q6.4 9.4 5 10.8 Q3.2 11.8 2 10.4 Q1 9 1 6 Z" fill="#f6c12e"/><path d="M12.4 6 Q13.2 3.4 11.8 3 Q11 2.8 10.6 4 Q10.6 2 9.6 2 Q8.6 2 8.6 3.6 Q8 2.6 7.4 3.4 Q7 4 7.2 6 Q7 9.4 8.4 10.8 Q10.2 11.8 11.4 10.4 Q12.4 9 12.4 6 Z" fill="#f6c12e"/><path d="M4.6 0.8 L5 1.6 M6.7 0.3 V1.3 M8.8 0.8 L8.4 1.6" stroke="#5cc8f0" stroke-width="0.8"/></svg>
<svg class="a" style="left:1783.4px;top:1009.6px;" width="12" height="12.6" viewBox="0 0 12 12.6"><circle cx="6" cy="7.4" r="4.9" fill="#f8c43a"/><path d="M1.2 4.6 L3.4 0.2 L6.8 3 Z" fill="#a45ad8"/><path d="M2.2 2.6 L4 4 M3 1.2 L5.4 3.2" stroke="#f06aa8" stroke-width="0.7"/><path d="M3.6 6.6 Q4.2 6 4.8 6.6 M6.6 6.4 Q7.2 5.8 7.8 6.4" fill="none" stroke="#6a4a20" stroke-width="0.7"/><circle cx="6.2" cy="9.2" r="1" fill="#8a5a30"/><path d="M7 9 L11 7.4 L10.6 10.4 Z" fill="#4ab0e8"/><rect x="9.6" y="1.6" width="1.2" height="1.2" fill="#f06aa8"/><rect x="10.6" y="4.4" width="1" height="1" fill="#4ab0e8"/><rect x="0.4" y="9.6" width="1" height="1" fill="#a45ad8"/></svg>
<svg class="a" style="left:1891.7px;top:1009.6px;" width="12.8" height="12.6" viewBox="0 0 12.8 12.6"><path d="M12.4 0.3 Q8 0.3 5 3.6 L3 6.4 L6.4 9.8 L9.2 7.8 Q12.4 4.8 12.4 0.3 Z" fill="#eef0f4"/><path d="M12.4 0.3 Q10.4 0.3 9 1 L11.8 3.8 Q12.4 2.4 12.4 0.3 Z" fill="#e8445a"/><circle cx="8.6" cy="4.2" r="1.3" fill="#7ad0f0" stroke="#9aa4b4" stroke-width="0.5"/><path d="M4.6 4 L1.6 4.6 L0.6 6.6 L3 6.4 Z M8.8 8.2 L8.2 11.2 L6.2 12.2 L6.4 9.8 Z" fill="#e8445a"/><path d="M3.2 7.6 L5.2 9.6 L3.6 10.6 L1.2 11.8 L2.2 9.2 Z" fill="#f59a3a"/></svg>
<div class="a" style="left:1232.2px;top:599.8px;width:36.6px;height:18.2px;background:#2a2a2a;border-radius:3px;"></div>
<svg class="a" style="left:1233.4px;top:604.6px;" width="14" height="9" viewBox="0 0 14 9"><path d="M4 0.4 H13 Q13.6 0.4 13.6 1 V8 Q13.6 8.6 13 8.6 H4 L0.3 4.5 Z" fill="#dedede"/><circle cx="4.4" cy="4.5" r="1.45" fill="#3a3a3a"/></svg>
<div class="a" style="left:1261.3px;top:601.3px;height:16px;line-height:16px;font-size:12px;color:#9aa4b4;white-space:nowrap;transform:translateX(-50%);">0</div>
<div class="a" style="left:1272.2px;top:599.5px;width:30.8px;height:18.7px;background:#2a2a2a;border-radius:3.5px;border:1px solid #262626;"></div><div class="a" style="left:1291px;top:600.5px;width:1px;height:16.7px;background:#444;"></div><svg class="a" style="left:1295.4px;top:605.1px;" width="7" height="8" viewBox="0 0 7 8"><path d="M0.6 0.7 L5.6 3.9 L0.6 7.1 Z" fill="none" stroke="#7e7e7e" stroke-width="0.9"/></svg>
<svg class="a" style="left:1275.6px;top:603px;" width="14" height="12" viewBox="0 0 14 12"><path d="M0.3 4 H2.8 L6.4 0.8 V11.2 L2.8 8 H0.3 Z" fill="#2ecc71"/><path d="M8.2 3 Q10 6 8.2 9" fill="none" stroke="#2ecc71" stroke-width="1.2"/><path d="M10.4 0.8 Q14 6 10.4 11.2" fill="none" stroke="#2ecc71" stroke-width="1.6"/></svg>
<div class="a" style="left:1307.7px;top:599.5px;width:30.1px;height:18.7px;background:#2a2a2a;border-radius:3.5px;border:1px solid #262626;"></div><div class="a" style="left:1308.7px;top:600.5px;width:17.299999999999955px;height:16.7px;background:#474747;border-radius:2.5px 0 0 2.5px;"></div><div class="a" style="left:1326px;top:600.5px;width:1px;height:16.7px;background:#2a2a2a;"></div><svg class="a" style="left:1330.4px;top:605.1px;" width="7" height="8" viewBox="0 0 7 8"><path d="M0.6 0.7 L5.6 3.9 L0.6 7.1 Z" fill="none" stroke="#7e7e7e" stroke-width="0.9"/></svg>
<svg class="a" style="left:1309.6px;top:601.7px;" width="14" height="14" viewBox="0 0 14 14"><g transform="translate(7.2 7) rotate(-40)"><path d="M-3.5 4.8 V-0.4 A3.5 3.5 0 0 1 3.5 -0.4 V4.8" fill="none" stroke="#e2e2e2" stroke-width="2.4"/><path d="M-3.5 4.8 V3.2 M3.5 4.8 V3.2" stroke="#9c9c9c" stroke-width="2.4"/></g></svg>
<div class="a" style="left:1342.8px;top:599.5px;width:30px;height:18.7px;background:#2a2a2a;border-radius:3.5px;border:1px solid #262626;"></div><div class="a" style="left:1343.8px;top:600.5px;width:17.200000000000045px;height:16.7px;background:#474747;border-radius:2.5px 0 0 2.5px;"></div><div class="a" style="left:1361px;top:600.5px;width:1px;height:16.7px;background:#2a2a2a;"></div><svg class="a" style="left:1365.4px;top:605.1px;" width="7" height="8" viewBox="0 0 7 8"><path d="M0.6 0.7 L5.6 3.9 L0.6 7.1 Z" fill="none" stroke="#7e7e7e" stroke-width="0.9"/></svg>
<svg class="a" style="left:1345.2px;top:602.2px;" width="14" height="14" viewBox="0 0 14 14"><path d="M4.5 0 V14 M9.5 0 V14 M0 4.5 H14 M0 9.5 H14" stroke="#ececec" stroke-width="1.2"/></svg>
<div class="a" style="left:1377.5px;top:599.5px;width:19.2px;height:18.7px;background:#2a2a2a;border-radius:3.5px;border:1px solid #262626;"></div>
<svg class="a" style="left:1380.2px;top:603.4px;" width="14" height="11" viewBox="0 0 14 11"><rect x="0" y="0" width="3.4" height="2.8" fill="#2ecc71"/><rect x="0" y="4.2" width="3.4" height="6.6" fill="#2ecc71"/><rect x="5.6" y="0.7" width="7.7" height="4.6" fill="none" stroke="#2ecc71" stroke-width="1.4"/><rect x="4.9" y="7.6" width="9.1" height="3.2" fill="#2ecc71"/></svg>
<div class="a" style="left:1401px;top:599.5px;width:18.2px;height:18.7px;background:#474747;border-radius:3.5px;border:1px solid #262626;"></div>
<svg class="a" style="left:1403.4px;top:604.2px;" width="14" height="10" viewBox="0 0 14 10"><path d="M0.5 0.6 L4.6 5 L0.5 9.4 M4.9 0.6 L9 5 L4.9 9.4 M9.3 0.6 L13.4 5 L9.3 9.4" fill="none" stroke="#e6e6e6" stroke-width="1.9"/></svg>
<div class="a" style="left:1423.5px;top:599.5px;width:30.5px;height:18.7px;background:#2a2a2a;border-radius:3.5px;border:1px solid #262626;"></div><div class="a" style="left:1424.5px;top:600.5px;width:17.200000000000045px;height:16.7px;background:#474747;border-radius:2.5px 0 0 2.5px;"></div><div class="a" style="left:1441.7px;top:600.5px;width:1px;height:16.7px;background:#2a2a2a;"></div><svg class="a" style="left:1446.1000000000001px;top:605.1px;" width="7" height="8" viewBox="0 0 7 8"><path d="M0.6 0.7 L5.6 3.9 L0.6 7.1 Z" fill="none" stroke="#7e7e7e" stroke-width="0.9"/></svg>
<svg class="a" style="left:1426.2px;top:603px;" width="13.5" height="12" viewBox="0 0 13.5 12"><rect x="0.6" y="0.6" width="12.3" height="8.8" fill="none" stroke="#e4e4e4" stroke-width="1.1"/><rect x="0" y="9.8" width="13.5" height="1.9" fill="#e4e4e4"/></svg>
<div class="a" style="left:1458.4px;top:599.5px;width:30.6px;height:18.7px;background:#2a2a2a;border-radius:3.5px;border:1px solid #262626;"></div><div class="a" style="left:1459.4px;top:600.5px;width:17.5px;height:16.7px;background:#474747;border-radius:2.5px 0 0 2.5px;"></div><div class="a" style="left:1476.9px;top:600.5px;width:1px;height:16.7px;background:#2a2a2a;"></div><svg class="a" style="left:1481.3000000000002px;top:605.1px;" width="7" height="8" viewBox="0 0 7 8"><path d="M0.6 0.7 L5.6 3.9 L0.6 7.1 Z" fill="none" stroke="#7e7e7e" stroke-width="0.9"/></svg>
<svg class="a" style="left:1460.8px;top:602.6px;" width="15" height="13" viewBox="0 0 15 13"><rect x="0.5" y="0.5" width="7.5" height="5" fill="none" stroke="#e0e0e0" stroke-width="1"/><path d="M2.4 7.4 H10 V2.4 M4.4 9.4 H12 V4.4 M6.4 11.4 H14 V6.4" fill="none" stroke="#c4c4c4" stroke-width="0.8"/></svg>
<div class="a" style="left:1493.8px;top:599.5px;width:30.2px;height:18.7px;background:#2a2a2a;border-radius:3.5px;border:1px solid #262626;"></div><div class="a" style="left:1494.8px;top:600.5px;width:17.0px;height:16.7px;background:#474747;border-radius:2.5px 0 0 2.5px;"></div><div class="a" style="left:1511.8px;top:600.5px;width:1px;height:16.7px;background:#2a2a2a;"></div><svg class="a" style="left:1516.2px;top:605.1px;" width="7" height="8" viewBox="0 0 7 8"><path d="M0.6 0.7 L5.6 3.9 L0.6 7.1 Z" fill="none" stroke="#7e7e7e" stroke-width="0.9"/></svg>
<svg class="a" style="left:1496px;top:602.2px;" width="14.4" height="14.4" viewBox="0 0 14.4 14.4"><rect x="0" y="0" width="8.8" height="8.8" fill="#dcdcdc"/><rect x="5.4" y="5.4" width="8.4" height="8.4" fill="#474747" stroke="#f0f0f0" stroke-width="1.1"/></svg>
<div class="a" style="left:1528.4px;top:599.5px;width:30.5px;height:18.7px;background:#2a2a2a;border-radius:3.5px;border:1px solid #262626;"></div><div class="a" style="left:1546.7px;top:600.5px;width:1px;height:16.7px;background:#444;"></div><svg class="a" style="left:1551.1000000000001px;top:605.1px;" width="7" height="8" viewBox="0 0 7 8"><path d="M0.6 0.7 L5.6 3.9 L0.6 7.1 Z" fill="none" stroke="#7e7e7e" stroke-width="0.9"/></svg>
<svg class="a" style="left:1531.9px;top:603px;" width="12.2" height="12.2" viewBox="0 0 12.2 12.2"><rect x="0.00" y="0.00" width="3.05" height="3.05" fill="#2ecc71"/><rect x="0.00" y="6.10" width="3.05" height="3.05" fill="#2ecc71"/><rect x="3.05" y="3.05" width="3.05" height="3.05" fill="#2ecc71"/><rect x="3.05" y="9.15" width="3.05" height="3.05" fill="#2ecc71"/><rect x="6.10" y="0.00" width="3.05" height="3.05" fill="#2ecc71"/><rect x="6.10" y="6.10" width="3.05" height="3.05" fill="#2ecc71"/><rect x="9.15" y="3.05" width="3.05" height="3.05" fill="#2ecc71"/><rect x="9.15" y="9.15" width="3.05" height="3.05" fill="#2ecc71"/></svg>
<div class="a btn" style="left:1563px;top:600px;width:19.4px;height:18.4px;"></div>
<svg class="a" style="left:1565.7px;top:602.2px;" width="14" height="14" viewBox="0 0 14 14"><g transform="translate(7 7)"><rect x="-1.25" y="-6.4" width="2.5" height="2.6" transform="rotate(0)" fill="#e4e4e4"/><rect x="-1.25" y="-6.4" width="2.5" height="2.6" transform="rotate(45)" fill="#e4e4e4"/><rect x="-1.25" y="-6.4" width="2.5" height="2.6" transform="rotate(90)" fill="#e4e4e4"/><rect x="-1.25" y="-6.4" width="2.5" height="2.6" transform="rotate(135)" fill="#e4e4e4"/><rect x="-1.25" y="-6.4" width="2.5" height="2.6" transform="rotate(180)" fill="#e4e4e4"/><rect x="-1.25" y="-6.4" width="2.5" height="2.6" transform="rotate(225)" fill="#e4e4e4"/><rect x="-1.25" y="-6.4" width="2.5" height="2.6" transform="rotate(270)" fill="#e4e4e4"/><rect x="-1.25" y="-6.4" width="2.5" height="2.6" transform="rotate(315)" fill="#e4e4e4"/><circle r="3.5" fill="none" stroke="#e4e4e4" stroke-width="1.9"/></g></svg>
</body></html>
